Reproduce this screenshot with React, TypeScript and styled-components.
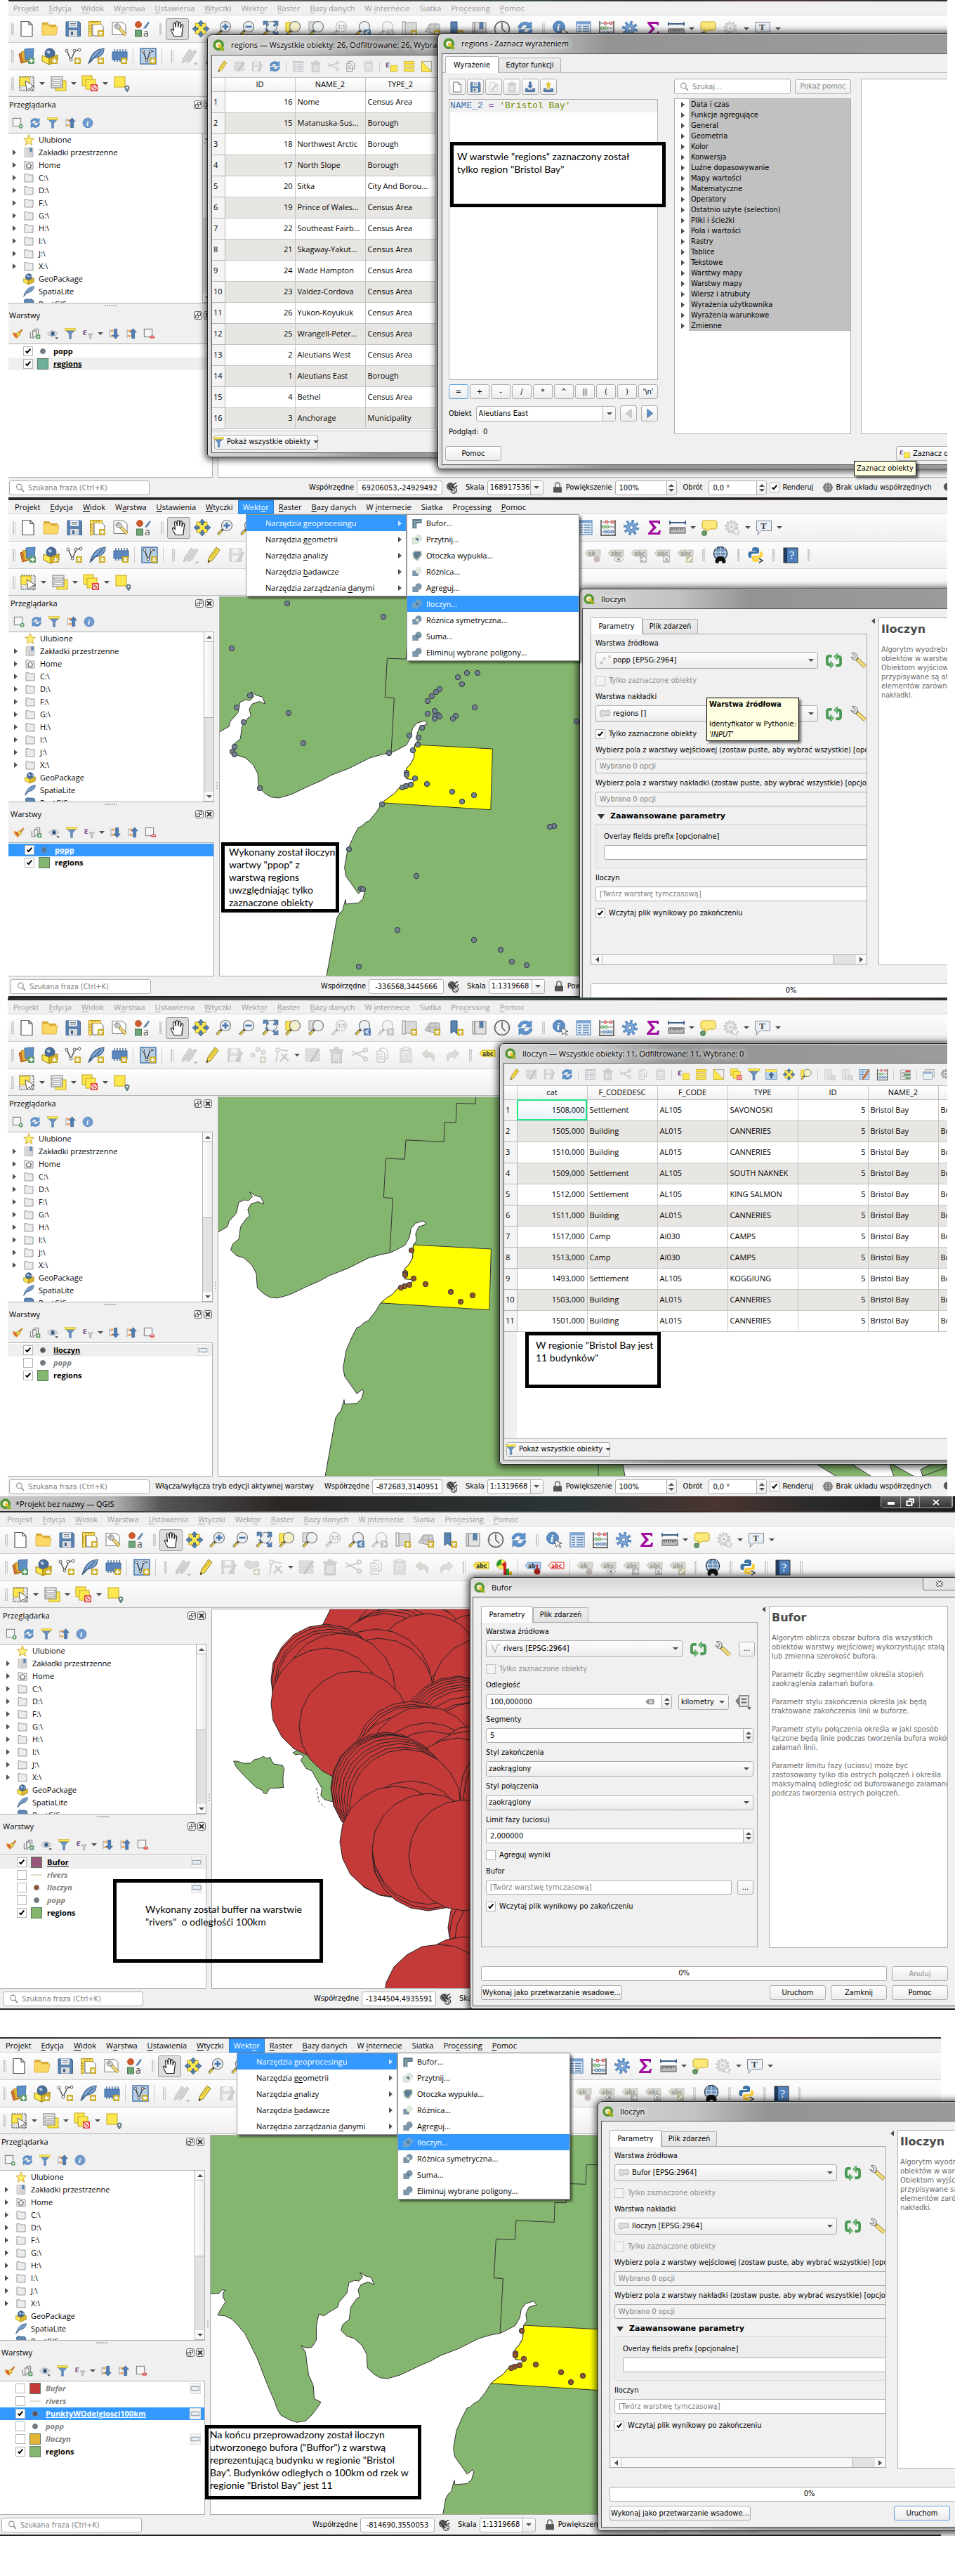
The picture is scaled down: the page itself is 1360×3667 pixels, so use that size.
import React from "react";
import styled, { createGlobalStyle, css } from "styled-components";

const ui = `"Open Sans", "Noto Sans", sans-serif`;
const form = `"DejaVu Sans Condensed", "DejaVu Sans", sans-serif`;
const green = "#85b66f";
const blue = "#3399ff";

const GlobalStyle = createGlobalStyle`
  *, *::before, *::after { box-sizing: border-box; }
  body { margin: 0; background: #fff; color: #000; font: 11px/18px ${ui}; }
  button, input, select { font: inherit; color: inherit; margin: 0; }
  u { text-underline-offset: 2px; }
`;

/* ---------- icons ---------- */

const Star = (
  <g>
    <rect x="14" y="14" width="9" height="9" rx="1" fill="#c9a91c" />
    <path d="M18.5 15.2v6.6M15.6 16.9l5.8 3.2M21.4 16.9l-5.8 3.2" stroke="#fff" strokeWidth="1.3" />
  </g>
);
const Lens = ({ fill = "#eef1f3" }: { fill?: string }) => (
  <g>
    <path d="M8.500 14.500L1.500 22" stroke="#555" strokeWidth="3.600" />
    <path d="M7 16.500L2 22" stroke="#f4d73a" strokeWidth="2" />
    <circle cx="14" cy="9" r="7.500" fill={fill} stroke="#777" strokeWidth="1.200" />
  </g>
);
const Tag = ({ fill, stroke, color, text = "abc" }: { fill: string; stroke: string; color: string; text?: string }) => (
  <g>
    <path d="M1 9.500L5 5h18v9H5z" fill={fill} stroke={stroke} />
    <text x="5" y="12.500" fontSize="8.500" fontWeight="700" fontFamily="DejaVu Sans Condensed" fill={color}>{text}</text>
  </g>
);
const grayTag = { fill: "#d9d9d2", stroke: "#c4c4bb", color: "#9b9b93" };
const Folder = (
  <path d="M3 4h6l2 2h10v15H3z" fill="#ececec" stroke="#888" strokeWidth="1.300" />
);
const Shape = ({ a, b, mid, dash }: { a: string; b: string; mid?: string; dash?: boolean }) => (
  <g>
    <rect x="2" y="9" width="13" height="12" fill={a} stroke={dash ? "#9ab09a" : "none"} strokeDasharray="2 2" />
    <circle cx="15" cy="9" r="7" fill={b} stroke={dash ? "#9ab09a" : "none"} strokeDasharray="2 2" />
    {mid && <path d="M9 9h6v6c-4 0-6-3-6-6z" fill={mid} />}
  </g>
);

const glyphs: Record<string, React.ReactNode> = {
  newdoc: <path d="M4 1.500h11l5 5V22.500H4zM15 1.500v5h5" fill="#fff" stroke="#555" strokeWidth="1.200" />,
  open: (
    <g>
      <path d="M1 3h8l2 3h10v4H1z" fill="#d9a93b" />
      <path d="M1 21V6h9l2 3h11l-2 12z" fill="#fbd765" stroke="#d9a93b" strokeWidth=".8" />
    </g>
  ),
  save: (
    <g>
      <path d="M2 2h19l1.500 2v18.500H2z" fill="#5a83b0" stroke="#41658f" />
      <rect x="6" y="2" width="12" height="8" fill="#e8eef5" />
      <path d="M8 4.500h8M8 7h8" stroke="#777" />
      <rect x="6" y="14" width="12" height="8.500" fill="#dcdcdc" />
      <rect x="9" y="16" width="3" height="5" fill="#41658f" />
    </g>
  ),
  layout: (
    <g>
      <path d="M7 5h11l4 4v13H7z" fill="#fff" stroke="#666" />
      <path d="M1.500 1.500h17v4h-13v17h-4z" fill="#fbe169" stroke="#b8941a" />
      <path d="M6 2v2M10 2v2M14 2v2M2 8h2M2 12h2M2 16h2" stroke="#8a6d10" />
      {Star}
    </g>
  ),
  style: (
    <g>
      <path d="M2 2.500h14l5 4v14H2z" fill="#fff" stroke="#777" />
      <path d="M11 10L21 21" stroke="#8b7420" strokeWidth="4.500" />
      <path d="M12 11L21 21" stroke="#f3dd7d" strokeWidth="3" />
      <path d="M6 6a4 4 0 0 1 6 6l-3 0a4 4 0 0 1-4-5l3 2 1.500-2z" fill="#d5d5d5" stroke="#666" strokeWidth=".8" />
    </g>
  ),
  symbols: (
    <g>
      <circle cx="6" cy="6" r="4.500" fill="#cf5a2b" stroke="#a8431b" strokeWidth=".7" />
      <path d="M14 10l6-8 2 1-5 8-4 1z" fill="#5a83b0" />
      <rect x="1.500" y="14" width="9" height="9" fill="#6ea476" stroke="#4a7d52" />
      <text x="13" y="23" fontSize="14" fontFamily="Open Sans" fill="#555">a</text>
    </g>
  ),
  hand: (
    <path d="M7 22.500C5 19 3 16 2.500 13.500c0-2 2.500-1.500 4 1.500L5.500 5c0-2 2.500-2 3 0l.8 5L9.500 3c.2-2 2.600-2 3 0l.2 7 .9-6c.5-2 2.700-1.500 2.700.3l-.3 6.700 1.200-4c.7-1.600 2.600-1 2.500.7-.2 5-1.700 7-1.700 14.800z" fill="#fff" stroke="#222" strokeWidth="1.200" />
  ),
  panmap: (
    <g>
      <rect x="4" y="4" width="15" height="15" fill="#fde74f" stroke="#c4a61a" />
      <g fill="#5a83b0" stroke="#365a85" strokeWidth=".8">
        <path d="M12 0l4 4.500h-2.500V8h-3V4.500H8zM12 24l4-4.500h-2.500V16h-3v3.500H8zM0 12l4.500-4v2.500H8v3H4.500V16zM24 12l-4.500-4v2.500H16v3h3.500V16z" />
      </g>
    </g>
  ),
  zoomin: <g><Lens /><path d="M14 4.500v9M9.500 9h9" stroke="#4a78ad" strokeWidth="2.800" /></g>,
  zoomout: <g><Lens /><path d="M9.500 9h9" stroke="#4a78ad" strokeWidth="2.800" /></g>,
  zoomfull: (
    <g>
      <Lens />
      <g fill="#5a83b0" stroke="#41658f" strokeWidth=".6">
        <path d="M2 1h7L7 3l3 3-2 2-3-3-3 2zM23 1v7l-2-2-3 3-2-2 3-3-3-3zM23 22h-7l2-2-3-3 2-2 3 3 3-3zM4 12l3 0 0 3z" />
      </g>
    </g>
  ),
  zoomsel: <g><rect x="1" y="3" width="11" height="13" fill="#fde74f" stroke="#c4a61a" /><Lens fill="#f3efcb" /></g>,
  zoomlayer: <g><rect x="1" y="2" width="11" height="13" fill="#ddd" stroke="#999" /><Lens /></g>,
  zoom11: <g><Lens /><text x="8.500" y="12" fontSize="8" fontWeight="700" fontFamily="Open Sans" fill="#555">1:1</text></g>,
  zoomlast: <g><Lens /><rect x="13" y="13" width="10" height="10" fill="#5a83b0" /><path d="M20 15l-4 3 4 3" fill="none" stroke="#fff" strokeWidth="1.700" /></g>,
  zoomnext: <g><Lens /><rect x="13" y="13" width="10" height="10" fill="#888" /><path d="M16 15l4 3-4 3" fill="none" stroke="#fff" strokeWidth="1.700" /></g>,
  newmap: <g><path d="M5 3h17v17H5z" fill="#dadada" stroke="#999" /><rect x="2" y="2" width="4" height="19" fill="#eee" stroke="#888" />{Star}</g>,
  new3d: <g><path d="M1 16L8 5h13l2 11-9 3z" fill="#cfcfcf" stroke="#999" /><path d="M4 12h18M9 5l-2 12M15 5l1 13" stroke="#aaa" />{Star}</g>,
  bmnew: <g><path d="M5 2h9v19l-4.500-4L5 20z" fill="#5a83b0" stroke="#365a85" />{Star}</g>,
  bookmarks: <g><path d="M3 3h3v18H3zM6 3h16v18H6z" fill="#e2e2e2" stroke="#888" /><path d="M13 3h5v10l-2.500-2-2.500 2z" fill="#5a83b0" stroke="#365a85" strokeWidth=".7" /></g>,
  clock: (
    <g>
      <circle cx="12" cy="12" r="10.500" fill="#f3f3f3" stroke="#666" strokeWidth="1.600" />
      <path d="M12 4v8l5 5" fill="none" stroke="#444" strokeWidth="1.400" />
      <path d="M12 2.500v2M12 19.500v2M2.500 12h2M19.500 12h2" stroke="#888" />
    </g>
  ),
  refresh: (
    <g fill="#5f93cd" stroke="#4173a8" strokeWidth=".7">
      <path d="M2 11C2 3 12 0 18 4l3-2v9h-9l3-3c-4-3-8-1-9 3z" />
      <path d="M22 13c0 8-10 11-16 7l-3 2v-9h9l-3 3c4 3 8 1 9-3z" />
    </g>
  ),
  identify: (
    <g>
      <circle cx="10" cy="9.500" r="8.500" fill="#5f8fc4" stroke="#4a78ad" />
      <text x="7" y="14.500" fontSize="14" fontStyle="italic" fontWeight="700" fontFamily="Liberation Serif" fill="#fff">i</text>
      <path d="M13 12l10 5-4 1 3 4-1.500 1-3-4-2.500 3z" fill="#fff" stroke="#555" />
    </g>
  ),
  table: (
    <g>
      <rect x="2" y="2" width="20" height="20" fill="#e3ecf7" stroke="#6a93c2" strokeWidth="1.300" />
      <rect x="2" y="2" width="20" height="3.500" fill="#7ba4d4" />
      <path d="M4 8.500h5M4 12h5M4 15.500h5M4 19h5M11 8.500h9M11 12h9M11 15.500h9M11 19h9" stroke="#5a83b0" strokeWidth="1.500" />
    </g>
  ),
  abacus: (
    <g>
      <path d="M2 1v22M22 1v22M1 23h22" stroke="#444" strokeWidth="1.400" />
      <path d="M2 4h20M2 11h20M2 18h20" stroke="#777" />
      <g fill="#f6bcbc" stroke="#c33"><circle cx="10" cy="4" r="2" /><circle cx="18" cy="4" r="2" /></g>
      <g fill="#c8e8c8" stroke="#4a9a4a"><circle cx="6" cy="11" r="2" /><circle cx="11" cy="11" r="2" /></g>
      <g fill="#c8dcf0" stroke="#3d6da3"><circle cx="8" cy="18" r="2" /><circle cx="13" cy="18" r="2" /><circle cx="18" cy="18" r="2" /></g>
    </g>
  ),
  gear: (
    <g>
      <circle cx="12" cy="12" r="9" fill="none" stroke="#5f8fc4" strokeWidth="4.500" strokeDasharray="3.500 3.570" />
      <circle cx="12" cy="12" r="7" fill="#7da8da" stroke="#4a78ad" />
      <circle cx="12" cy="12" r="2.600" fill="#f3f3f3" stroke="#4a78ad" />
    </g>
  ),
  sigma: <path d="M4 2h16v5h-2l-1-2H9l6 7-7 7h9l1.500-3H21l-1 6H3v-2l7-8-6-8z" fill="#a10fa1" />,
  ruler: (
    <g>
      <path d="M1 5h22M1 2.500v5M23 2.500v5" stroke="#3d5f85" strokeWidth="2" />
      <rect x="1" y="12" width="22" height="8" fill="#bbb" stroke="#555" />
      <path d="M4 12v4M7 12v3M10 12v4M13 12v3M16 12v4M19 12v3" stroke="#444" />
    </g>
  ),
  bubble: (
    <g>
      <path d="M5 2h15c2 0 3 1 3 3v6c0 2-1 3-3 3h-7l-6 5 1-5H5c-2 0-3-1-3-3V5c0-2 1-3 3-3z" fill="#fde97a" stroke="#c4a61a" />
      <circle cx="5" cy="20" r="3.500" fill="#6a9a6a" stroke="#4a7a4a" />
    </g>
  ),
  gearplay: (
    <g>
      <circle cx="11" cy="11" r="8" fill="#ccc" stroke="#888" strokeWidth="3" strokeDasharray="3 2" />
      <circle cx="11" cy="11" r="5" fill="#eee" stroke="#888" />
      <path d="M9.500 8.500l4 2.500-4 2.500z" fill="#777" />
      <path d="M14 13l9 5-4 1 2 3-2 1-2-3-2 2z" fill="#fff" stroke="#777" />
    </g>
  ),
  textnote: (
    <g>
      <path d="M1.500 2.500h21v14H8l-5 6 1-6H1.500z" fill="#e9f0f6" stroke="#889" />
      <text x="7" y="14" fontSize="13" fontWeight="700" fontFamily="Liberation Serif" fill="#444">T</text>
    </g>
  ),
  layers: (
    <g>
      <path d="M1 9l10-3 3 13-10 3z" fill="#d9752f" stroke="#a8531b" />
      <path d="M4 6l11-2 1 14-9 2z" fill="#e5b43b" stroke="#ad8318" />
      <path d="M9 2l13-1-1 15-11 1z" fill="#5f8fc4" stroke="#3d6da3" />
      <rect x="14" y="14" width="9" height="9" rx="1" fill="#5c9a66" />
      <path d="M18.500 15.500v6M15.500 18.500h6" stroke="#fff" strokeWidth="1.800" />
    </g>
  ),
  gpkg: (
    <g>
      <circle cx="12" cy="8" r="7" fill="#4a6f9c" stroke="#33506f" />
      <path d="M7 5l4-1 2 3-3 2zM14 7l4-2 0 4z" fill="#bcd0e4" />
      <path d="M1 11l10 4v9L1 19z" fill="#fce94f" stroke="#9b7d10" />
      <path d="M23 10l-12 5v9l12-5z" fill="#dcb92a" stroke="#9b7d10" />
    </g>
  ),
  gpkgnew: <g><circle cx="12" cy="8" r="7" fill="#4a6f9c" stroke="#33506f" /><path d="M7 5l4-1 2 3-3 2z" fill="#bcd0e4" /><path d="M1 11l10 4v9L1 19z" fill="#fce94f" stroke="#9b7d10" /><path d="M23 10l-12 5v9l12-5z" fill="#dcb92a" stroke="#9b7d10" />{Star}</g>,
  vnew: (
    <g>
      <path d="M3 4l6 13L15 4l5-1" fill="none" stroke="#555" strokeWidth="1.500" />
      <g fill="#fff" stroke="#555"><circle cx="3" cy="4" r="2" /><circle cx="9" cy="17" r="2" /><circle cx="14" cy="4" r="2" /><circle cx="21" cy="3" r="2" /></g>
      {Star}
    </g>
  ),
  feather: <path d="M1 23C5 8 12 2 23 1c0 8-6 13-17 14zM3 21L19 4" fill="#7ea6d3" stroke="#3f5f85" strokeWidth="1.200" />,
  feathernew: <g><path d="M1 23C5 8 12 2 23 1c0 8-6 13-17 14zM3 21L19 4" fill="#7ea6d3" stroke="#3f5f85" strokeWidth="1.200" />{Star}</g>,
  chip: (
    <g>
      <path d="M5 2v18M9 2v18M13 2v18M17 2v18M21 2v18" stroke="#3d5f85" strokeWidth="1.300" />
      <rect x="2" y="6" width="21" height="11" fill="#5a86bd" stroke="#3d6da3" />
      {Star}
    </g>
  ),
  vbox: (
    <g>
      <rect x="1" y="1" width="22" height="22" fill="#b9cfe6" stroke="#4a78ad" strokeWidth="1.500" />
      <path d="M5 5l5 14 5-14h5" fill="none" stroke="#444" strokeWidth="1.500" />
      <g fill="#fff" stroke="#555"><circle cx="5" cy="5" r="1.800" /><circle cx="10" cy="18" r="1.800" /><circle cx="15" cy="5" r="1.800" /></g>
      {Star}
    </g>
  ),
  pencils: <g fill="#aaa" stroke="#888"><path d="M2 22l2-7L13 2l4 3L8 19zM9 22l2-6 9-13 3 2-8 13z" /><path d="M19 22h5l-2.500 2z" fill="#555" /></g>,
  pencil: <g><path d="M4 23l2-8L16 1l5 4L11 19z" fill="#f5dc4c" stroke="#8f7a1c" /><path d="M4 23l1-4 2 2z" fill="#333" /><path d="M8 16L18 3" stroke="#b39a24" /></g>,
  saveedit: <g><path d="M2 3h17v18H2z" fill="#bbb" stroke="#777" /><path d="M6 3h9v6H6zM5 13h11v8H5z" fill="#eee" /><path d="M13 21L22 8" stroke="#999" strokeWidth="3.500" /></g>,
  points: <g><g fill="#ccc" stroke="#888"><circle cx="4" cy="12" r="3" /><circle cx="11" cy="4" r="3" /><circle cx="19" cy="8" r="3" /></g>{Star}</g>,
  blob: <g><path d="M2 5c5-6 9 2 14-1 8-2 7 8 2 8-5-2-7 6-12 1C2 12 0 9 2 5z" fill="#bbb" stroke="#888" />{Star}</g>,
  vertex: <g><path d="M4 22L7 4l14 2" fill="none" stroke="#888" strokeWidth="1.500" /><rect x="4" y="2" width="5" height="5" fill="#eee" stroke="#888" /><path d="M12 10l10 11M20 10L10 21" stroke="#999" strokeWidth="2.600" /></g>,
  editmulti: <g><path d="M1 3h20v4H1zM1 9h20v4H1zM1 15h20v5H1z" fill="#ccc89a" stroke="#999" /><path d="M8 22L20 4" stroke="#888" strokeWidth="3" /></g>,
  trash: <g fill="#c9a9a9" stroke="#987"><path d="M3 4h18v3H3zM9 1h6v3H9zM4.500 8h15v15h-15z" /><path d="M9 10v10M12 10v10M15 10v10" stroke="#fff" /></g>,
  cut: <g fill="none" stroke="#999" strokeWidth="2"><path d="M1 6l18 10M1 12l18-6" /><circle cx="20.500" cy="4.500" r="2.500" /><circle cx="20.500" cy="17.500" r="2.500" /></g>,
  copy: <g fill="#f4f4f4" stroke="#777"><path d="M8 2h7l4 4v11H8z" /><path d="M4 6h7l4 4v12H4z" /><path d="M6 11h6M6 14h7M6 17h7" /></g>,
  paste: <g fill="#f0f0f0" stroke="#888"><rect x="4" y="3" width="16" height="19" fill="#ddd" /><rect x="7" y="6" width="10" height="13" /><path d="M8 1h8v4H8zM9 10h6M9 13h6M9 16h6" /></g>,
  undo: <path d="M2 10l7-6v4c9 0 13 4 9 13 0-5-3-7-9-7v3z" fill="#c9b48d" stroke="#a79465" />,
  redo: <path d="M22 10l-7-6v4c-9 0-13 4-9 13 0-5 3-7 9-7v3z" fill="#aebfae" stroke="#8a9c8a" />,
  abc: <Tag fill="#fce94f" stroke="#c4a61a" color="#333" />,
  diagram: <g><circle cx="8" cy="8" r="7" fill="#fce94f" stroke="#888" strokeWidth=".5" /><path d="M8 8V1a7 7 0 0 0-6 10z" fill="#2c9a2c" /><path d="M8 8l6-4a7 7 0 0 1-1 9z" fill="#c22" /><path d="M11 10h4v13h-4z" fill="#c22" /><path d="M15 14h4v9h-4z" fill="#2c9a2c" /><path d="M19 18h4v5h-4z" fill="#d8b51c" /></g>,
  abpin: <g><Tag fill="#b9d4f3" stroke="#5a86bd" color="#333" text="ab" /><path d="M18 8v8" stroke="#a33" strokeWidth="2.500" /><circle cx="18" cy="18" r="4.500" fill="#a52222" /></g>,
  abcred: <Tag fill="#fff" stroke="#d22" color="#d22" />,
  tagpin: <g><Tag {...grayTag} text="ab" /><circle cx="18" cy="18" r="4.500" fill="#c9b9b9" /></g>,
  tageye: <g><Tag {...grayTag} /><path d="M9 18c4-5 10-5 14 0-4 5-10 5-14 0z" fill="#eee" stroke="#aaa" /><circle cx="16" cy="18" r="2" fill="#999" /></g>,
  tagmove: <g><Tag {...grayTag} /><rect x="13" y="13" width="10" height="10" fill="#bbb" /><path d="M15 18h6M18 15l3 3-3 3" fill="none" stroke="#fff" strokeWidth="1.500" /></g>,
  tagrot: <g><Tag {...grayTag} /><rect x="13" y="13" width="10" height="10" fill="#bbb" /><path d="M16 20a3 3 0 1 1 4 0" fill="none" stroke="#fff" strokeWidth="1.500" /></g>,
  tagedit: <g><Tag {...grayTag} /><rect x="13" y="13" width="10" height="10" fill="#cbc7a8" /><path d="M15 21l6-6" stroke="#fff" strokeWidth="1.800" /></g>,
  globe: <g><circle cx="12" cy="10" r="9.500" fill="#6f93bb" stroke="#26384d" strokeWidth="1.500" /><path d="M3 8h18M3 13h18M12 1v18M7 2c-3 5-3 11 0 16M17 2c3 5 3 11 0 16" fill="none" stroke="#dfe8f0" /><path d="M5 23c-2-3 2-9 5-9h4c3 0 7 6 5 9-2 2-5 1-5-2h-4c0 3-3 4-5 2z" fill="#111" /></g>,
  python: <g><path d="M12 1c-5 0-5 2-5 5h6v1H4c-3 0-4 8 0 9h2v-4c0-1 1-2 3-2h6c1 0 2-1 2-2V4c0-2-2-3-5-3z" fill="#3b73a6" /><path d="M12 22c5 0 5-2 5-5h-6v-1h8c4 0 4-8 1-9h-2v4c0 1-1 2-3 2H9c-1 0-2 1-2 2v4c0 2 2 3 5 3z" fill="#fcd23f" /><path d="M17 17l5 3-5 3" fill="none" stroke="#444" strokeWidth="1.500" /></g>,
  book: <g><rect x="2" y="2" width="20" height="21" fill="#4f81bd" stroke="#333" /><rect x="2" y="2" width="5" height="21" fill="#223c5c" /><text x="10" y="18" fontSize="16" fontFamily="Liberation Serif" fill="#fff">?</text></g>,
  selrect: <g><rect x="2" y="2" width="20" height="20" fill="#e4e4e4" stroke="#222" strokeDasharray="2 1.500" /><rect x="2" y="3" width="14" height="12" fill="#fde74f" stroke="#c4a61a" /><path d="M10 8l13 8-5 1 3 5-2 1-3-5-4 4z" fill="#fff" stroke="#555" /></g>,
  selform: <g><rect x="8" y="8" width="15" height="14" fill="#fde74f" stroke="#c4a61a" /><rect x="2" y="2" width="16" height="16" fill="#e9e9e9" stroke="#777" /><path d="M4 6h12v3H4zM4 12h12v3H4z" fill="#fff" stroke="#888" /></g>,
  deselect: <g><rect x="1" y="1" width="14" height="14" fill="#fde74f" stroke="#c4a61a" /><rect x="6" y="6" width="14" height="14" fill="#fde74f" stroke="#c4a61a" /><rect x="13" y="13" width="10" height="10" rx="1" fill="#d33" /><circle cx="18" cy="18" r="3.200" fill="none" stroke="#fff" strokeWidth="1.300" /><path d="M15.500 20.500l5-5" stroke="#fff" strokeWidth="1.300" /></g>,
  selloc: <g><rect x="2" y="2" width="15" height="15" fill="#fde74f" stroke="#c4a61a" /><path d="M20 24c-4-5-4-9 0-9s4 4 0 9z" fill="#6b8797" stroke="#466" strokeWidth=".8" /><circle cx="20" cy="18" r="1.300" fill="#fff" /></g>,
  additem: <g><rect x="2" y="2" width="17" height="17" fill="#f5f5f5" stroke="#777" strokeWidth="1.500" /><circle cx="19" cy="19" r="4.500" fill="#5c9a66" /><path d="M19 16.500v5M16.500 19h5" stroke="#fff" strokeWidth="1.500" /></g>,
  removeitem: <g><rect x="2" y="2" width="17" height="17" fill="#f5f5f5" stroke="#777" strokeWidth="1.500" /><rect x="14" y="16" width="10" height="6" rx="2" fill="#d44" /><path d="M16 19h6" stroke="#fff" strokeWidth="1.500" /></g>,
  filter: <g><path d="M2 4h20l-8 9v10h-4V13z" fill="#6a93c2" stroke="#456f9f" /><rect x="1" y="1" width="22" height="4" fill="#fde74f" stroke="#c4a61a" strokeWidth=".8" /></g>,
  collapse: <g><path d="M3 3v18M3 6h5M3 17h5" stroke="#888" /><rect x="6" y="4" width="5" height="4" fill="#f59b3f" /><rect x="6" y="15" width="5" height="4" fill="#f59b3f" /><path d="M16 1l7 8h-4v13h-6V9H9z" fill="#4f7db3" stroke="#365a85" /></g>,
  expand: <g><path d="M3 3v18M3 6h5M3 17h5" stroke="#888" /><rect x="6" y="4" width="5" height="4" fill="#f59b3f" /><rect x="6" y="15" width="5" height="4" fill="#f59b3f" /><path d="M16 23l7-8h-4V2h-6v13H9z" fill="#4f7db3" stroke="#365a85" /></g>,
  info: <g><circle cx="12" cy="12" r="10.500" fill="#6f9bcf" stroke="#4a78ad" /><text x="9" y="18" fontSize="17" fontStyle="italic" fontWeight="700" fontFamily="Liberation Serif" fill="#fff">i</text></g>,
  brush: <g><path d="M1 9l6 1 8 5-4 7C5 21 1 15 1 9z" fill="#e8a33a" /><path d="M3 10l5 9 3 2-3-9z" fill="#d64b3a" /><path d="M9 12l4-4 5 6-4 4z" fill="#f5dc4c" stroke="#8f7a1c" /><path d="M14 9l7-7 2 2-6 8z" fill="#c77b2a" /></g>,
  addgroup: <g fill="none" stroke="#777" strokeWidth="1.500"><path d="M7 18V6h3M11 14V2h8v12M2 9v12h9" /><rect x="7" y="6" width="8" height="12" fill="#eee" /><rect x="14" y="14" width="9" height="9" fill="#5c9a66" stroke="none" /><path d="M18.500 16v5M16 18.500h5" stroke="#fff" /></g>,
  eye: <g><path d="M1 12C6 4 17 4 22 12 17 19 6 19 1 12z" fill="#eee" stroke="#999" strokeWidth="1.500" /><circle cx="12" cy="12" r="5" fill="#6a8fb8" /><circle cx="12" cy="12" r="2.200" fill="#123" /><path d="M17 20h7l-3.500 4z" fill="#555" /></g>,
  eps: <g><text x="1" y="15" fontSize="21" fontFamily="Liberation Serif" fontWeight="700" fill="#7a4a86">ε</text><path d="M12 12h11l-4 5v6h-3v-6z" fill="#ccc" stroke="#999" /></g>,
  star: <path d="M12 1l3 8 8 .5-6 5.500 2 8-7-4.500L5 23l2-8-6-5.500L9 9z" fill="#fdee76" stroke="#c99a1c" strokeWidth="1.300" />,
  folder: Folder,
  home: <g>{Folder}<path d="M12 8l6 5h-2v5H8v-5H6z" fill="#fff" stroke="#333" strokeWidth="1.300" /></g>,
  bookmark: <g><rect x="3" y="2" width="18" height="20" rx="1" fill="#d4d4d4" stroke="#aaa" /><path d="M6 2v20" stroke="#f5f5f5" /><path d="M14 2h5v10l-2.500-2-2.500 2z" fill="#5a83b0" /></g>,
  elephant: <path d="M2 4c3-4 7-3 10-2 4-1 9 0 10 3 1 6-2 9-4 13-2 4-5 3-5 0v-5c-4 3-8 4-9-1z" fill="#5f88b5" stroke="#355a80" strokeWidth="1.500" />,
  epsy: <g><rect x="10" y="10" width="13" height="12" fill="#fde74f" stroke="#c4a61a" /><text x="0" y="14" fontSize="20" fontFamily="Liberation Serif" fontWeight="700" fill="#6a4378">ε</text></g>,
  selall: <path d="M2 2h20v5H2zM2 9.500h20v5H2zM2 17h20v5H2z" fill="#fde74f" stroke="#c4a61a" />,
  invert: <g><rect x="2" y="2" width="20" height="20" fill="#fdf6b0" stroke="#c4a61a" /><path d="M2 2l20 20V2z" fill="#eee" stroke="#999" /><path d="M2 2l20 20H2z" fill="#fde74f" stroke="#c4a61a" /></g>,
  movetop: <g><rect x="1" y="2" width="22" height="20" fill="#bcd3ec" stroke="#5a83b0" /><rect x="1" y="2" width="22" height="5" fill="#fde74f" /><path d="M12 7l6 7h-4v6h-4v-6H6z" fill="#41658f" /></g>,
  column: <g fill="#ddd" stroke="#999"><path d="M2 2h7v20H2zM9 2h7v20H9z" /><rect x="14" y="14" width="9" height="9" fill="#bbb" /></g>,
  editcol: <g><rect x="1" y="2" width="20" height="20" fill="#cfe0f3" stroke="#5a83b0" /><path d="M1 7h20M1 12h20M1 17h20M8 2v20" stroke="#5a83b0" /><path d="M8 22L20 3" stroke="#c96d2b" strokeWidth="3.500" /></g>,
  cond: <g><path d="M2 3h20v5H2zM2 10h20v5H2zM2 17h20v5H2z" fill="#eee" stroke="#888" /><path d="M12 4h9v3h-9z" fill="#d44" /><path d="M8 11h13v3H8zM12 18h9v3h-9z" fill="#5c9a66" /></g>,
  docked: <g><rect x="5" y="2" width="18" height="15" fill="#e5e5e5" stroke="#999" /><rect x="1" y="7" width="18" height="15" fill="#e9f0f8" stroke="#8899aa" /><path d="M1 7h18v4H1z" fill="#9db6d3" /></g>,
  search: <g fill="none" stroke="#888" strokeWidth="2"><circle cx="10" cy="9" r="7" /><path d="M15 14l7 8" strokeWidth="3" /></g>,
  cycle: <g fill="none" stroke="#4c9a55" strokeWidth="4"><path d="M9 5H5c-2 0-3 1-3 3v7c0 2 1 3 3 3h3M15 19h4c2 0 3-1 3-3V9c0-2-1-3-3-3h-3" /><path d="M17 1l-5 5 5 5zM7 13l5 5-5 5z" fill="#7cc184" strokeWidth="1" /></g>,
  wrench: <g><path d="M10 10L22 21" stroke="#8b7420" strokeWidth="5.500" /><path d="M11 11L22 21" stroke="#f3dd7d" strokeWidth="4" /><path d="M3 2c5-2 9 2 8 6l-1 3c-3 1-7 0-8-4l4 2 2-3z" fill="#e5e5e5" stroke="#666" /></g>,
  lock: <g><path d="M7 12V7c0-7 10-7 10 0v5" fill="none" stroke="#777" strokeWidth="2.500" /><rect x="3" y="11" width="18" height="12" rx="1" fill="#555" /></g>,
  extent: <g><circle cx="9" cy="9" r="7" fill="#777" stroke="#222" /><circle cx="16" cy="17" r="6" fill="#ddd" stroke="#222" strokeWidth="1.500" /><path d="M4 6l10 12M8 3l10 12M14 6l7-4M19 10l4-2M13 16h2M17 19h2" stroke="#222" strokeWidth="1.800" /></g>,
  crs: <g><circle cx="12" cy="12" r="9.500" fill="#aaa" stroke="#666" /><path d="M0 12h24M3 7h18M3 17h18M12 2v20M7 3c-3 6-3 12 0 18M17 3c3 6 3 12 0 18" fill="none" stroke="#555" /></g>,
  message: <path d="M12 2C2 2 0 9 2 14c2 4 6 5 9 5l3 4 1-5c6-1 8-5 7-9s-4-7-10-7z" fill="#555" />,
  memory: <g><path d="M4 5v14M8 5v14M12 5v14M16 5v14M20 5v14" stroke="#888" /><rect x="2" y="8" width="20" height="8" fill="#eef1f5" stroke="#8898a8" strokeWidth="1.500" /></g>,
  polyline: <path d="M3 3l7 17L16 4l6-1" fill="none" stroke="#999" strokeWidth="1.500" />,
  polygon: <path d="M2 6c5-3 8 2 12 0 6-2 8-1 8 5s-4 5-8 4-6 4-10 3S0 9 2 6z" fill="#ddd" stroke="#888" />,
  pointset: <g fill="#fff" stroke="#777"><circle cx="4" cy="17" r="2" /><circle cx="10" cy="8" r="2" /><circle cx="21" cy="4" r="2" /></g>,
  override: <g fill="#e8e8e8" stroke="#666" strokeWidth="1.300"><path d="M1 11l6-7v14z" fill="#888" /><path d="M6 3h14v16H6z" /><path d="M9 8h8M9 13h8" strokeWidth="2" /><path d="M18 20h6l-3 4z" fill="#555" stroke="none" /></g>,
  clear: <g><path d="M0 12l7-7h16v14H7z" fill="#999" /><path d="M10 8l8 8M18 8l-8 8" stroke="#fff" strokeWidth="2" /></g>,
  import: <g><path d="M2 15h5v3h10v-3h5v7H2z" fill="#5a83b0" stroke="#365a85" /><path d="M12 15l5-6h-3V1h-4v8H7z" fill="#4f7db3" stroke="#365a85" /></g>,
  export: <g><path d="M2 15h5v3h10v-3h5v7H2z" fill="#5a83b0" stroke="#365a85" /><path d="M12 1l5 6h-3v8h-4V7H7z" fill="#f0d92f" stroke="#c4a61a" /></g>,
  editdoc: <g><path d="M3 2h12l5 5v15H3z" fill="#f3f3f3" stroke="#888" /><path d="M8 19L19 5" stroke="#999" strokeWidth="3.500" /></g>,
  prev: <path d="M18 2v20L5 12z" fill="#ccc" stroke="#aaa" />,
  next: <path d="M6 2v20l13-10z" fill="#5a8cc5" stroke="#3a628f" />,
  buffer: <g><path d="M2 3h20v9H11v11H2z" fill="#5d7b93" /><path d="M7 22V8h14" fill="none" stroke="#9db3a5" strokeWidth="2" /></g>,
  clip: <Shape a="#dfe8dc" b="#dfe8dc" mid="#5d7b93" dash />,
  hull: <g><path d="M2 6l5-4h14l1 9-9 12-9-5z" fill="#9db3a5" /><path d="M4 8l4-4h11l0 6-8 9-5-5z" fill="#5d7b93" /></g>,
  diff: <Shape a="#7c96aa" b="#dfe8dc" />,
  dissolve: <Shape a="#7c96aa" b="#7c96aa" />,
  intersect: <Shape a="#6f9fc9" b="#6f9fc9" mid="#4a7896" dash />,
  symdiff: <Shape a="#7c96aa" b="#7c96aa" mid="#dfe8dc" />,
  union: <Shape a="#7c96aa" b="#7c96aa" mid="#5d7b93" />,
  qgis: <g><circle cx="11.500" cy="11.500" r="8.300" fill="#f6f6e4" stroke="#589632" strokeWidth="5.500" /><path d="M12 12l5 0 6 7v4h-5l-6-7z" fill="#93b023" /><path d="M10 10h5l3 4-4 4-4-4z" fill="#f0bd2d" /></g>,
};

const Svg = styled.svg<{ $dim?: boolean }>`
  display: block;
  flex: none;
  overflow: visible;
  ${(p) => p.$dim && css`opacity: 0.45; filter: grayscale(0.8);`}
`;
const Icon = ({ name, size = 24, dim }: { name: string; size?: number; dim?: boolean }) => (
  <Svg width={size} height={size} viewBox="0 0 24 24" $dim={dim} aria-hidden="true">{glyphs[name]}</Svg>
);

/* ---------- shared parts ---------- */

const Mnemonic = ({ text }: { text: string }) => {
  const i = text.indexOf("&");
  if (i < 0) return <>{text}</>;
  return <>{text.slice(0, i)}<u>{text[i + 1]}</u>{text.slice(i + 2)}</>;
};

const Arrow = styled.span<{ $dir?: "down" | "right" | "up" | "left"; $light?: boolean }>`
  display: block;
  flex: none;
  width: 0;
  height: 0;
  border: 4px solid transparent;
  ${(p) => {
    const c = p.$light ? "#cfe5ff" : "#505050";
    switch (p.$dir) {
      case "right": return `border-left: 5px solid ${c}; border-right: 0;`;
      case "left": return `border-right: 5px solid ${c}; border-left: 0;`;
      case "up": return `border-bottom: 4px solid ${c}; border-top: 0;`;
      default: return `border-top: 4px solid ${c}; border-bottom: 0;`;
    }
  }}
`;

const Check = styled.input.attrs({ type: "checkbox" })`
  appearance: none;
  flex: none;
  width: 14px;
  height: 14px;
  border: 1px solid #b4b4b4;
  background: #fff;
  display: grid;
  place-items: center;
  &:checked::after {
    content: "";
    width: 4px;
    height: 8px;
    margin-bottom: 2px;
    border: solid #000;
    border-width: 0 2px 2px 0;
    transform: rotate(40deg);
  }
  &:disabled { background: #f3f3f3; border-color: #c4c4c4; }
`;

const PushButton = styled.button<{ $w?: number; $focus?: boolean }>`
  display: inline-flex;
  align-items: center;
  justify-content: center;
  gap: 4px;
  flex: none;
  height: 21px;
  ${(p) => p.$w && `width: ${p.$w}px;`}
  padding: 0 4px;
  border: 1px solid ${(p) => (p.$focus ? "#5c9fe0" : "#adadad")};
  border-radius: 3px;
  background: linear-gradient(#fefefe, #ececec);
  white-space: nowrap;
  &:disabled { color: #8c8c8c; }
`;

const Box = styled.div<{ $w?: number; $h?: number; $plain?: boolean; $flat?: boolean }>`
  display: flex;
  align-items: center;
  flex: ${(p) => (p.$w ? "none" : "1 1 auto")};
  min-width: 0;
  ${(p) => p.$w && `width: ${p.$w}px;`}
  height: ${(p) => p.$h ?? 21}px;
  border: 1px solid #adadad;
  border-radius: 3px;
  background: ${(p) => (p.$flat ? "#f2f2f2" : p.$plain ? "#fff" : "linear-gradient(#fdfdfd, #ececec)")};
  overflow: hidden;
`;
const BoxInput = styled.input<{ $center?: boolean }>`
  flex: 1;
  width: 0;
  min-width: 0;
  height: 100%;
  border: 0;
  padding: 0 5px;
  outline: 0;
  background: transparent;
  text-align: ${(p) => (p.$center ? "center" : "left")};
  &::placeholder { color: #7f7f7f; opacity: 1; }
`;
const BoxSelect = styled.select`
  flex: 1;
  width: 0;
  min-width: 0;
  height: 100%;
  border: 0;
  padding: 0 0 0 3px;
  appearance: none;
  background: transparent;
`;
const BoxEnd = styled.span<{ $line?: boolean; $w?: number }>`
  display: flex;
  flex-direction: column;
  gap: 3px;
  align-items: center;
  justify-content: center;
  width: ${(p) => p.$w ?? 18}px;
  height: 100%;
  flex: none;
  ${(p) => p.$line && css`border-left: 1px solid #adadad; background: linear-gradient(#fefefe, #ececec);`}
`;
const BoxLead = styled.span`
  display: flex;
  padding-left: 5px;
`;

const Combo = ({ id, value, w, h, icon, line, label }: { id?: string; value: string; w?: number; h?: number; icon?: string; line?: boolean; label?: string }) => (
  <Box $w={w} $h={h} $plain={line}>
    {icon && <BoxLead><Icon name={icon} size={16} /></BoxLead>}
    <BoxSelect id={id} aria-label={label} defaultValue={value}><option>{value}</option></BoxSelect>
    <BoxEnd $line={line}><Arrow /></BoxEnd>
  </Box>
);
const Spin = ({ id, value, w, clear, label }: { id?: string; value: string; w?: number; clear?: boolean; label?: string }) => (
  <Box $w={w} $plain>
    <BoxInput id={id} aria-label={label} defaultValue={value} />
    {clear && <BoxLead><Icon name="clear" size={13} /></BoxLead>}
    {clear && <BoxEnd $w={10} />}
    <BoxEnd $line $w={14}><Arrow $dir="up" /><Arrow /></BoxEnd>
  </Box>
);

const Note = styled.p<{ $x: number; $y: number; $w: number; $h: number; $pad?: string; $clear?: boolean }>`
  position: absolute;
  left: ${(p) => p.$x}px;
  top: ${(p) => p.$y}px;
  width: ${(p) => p.$w}px;
  height: ${(p) => p.$h}px;
  margin: 0;
  padding: ${(p) => p.$pad ?? "6px"};
  border: 5px solid #000;
  background: ${(p) => (p.$clear ? "transparent" : "#fff")};
  font: 14px/18px Lato, ${ui};
  white-space: pre;
  z-index: 3;
`;

/* ---------- main window ---------- */

/* $cut trims everything at the right edge, $r only insets the main window */
const Stage = styled.section<{ $l?: number; $r?: number; $cut?: number }>`
  position: relative;
  overflow: hidden;
  margin-right: ${(p) => p.$cut ?? 0}px;
  padding: 0 ${(p) => p.$r ?? 0}px 0 ${(p) => p.$l ?? 0}px;
`;
const Edge = styled.div<{ $plain?: boolean }>`
  height: 2px;
  background: ${(p) => (p.$plain ? "#222" : "linear-gradient(90deg, #2a2a2a, #555 30%, #3b4a4a 55%, #2a2a2a 70%, #4d3a36 80%, #2a2a2a)")};
`;
const Chrome = styled.div`
  background: #f0f0f0;
`;
const MenuBar = styled.nav<{ $pad: number; $off?: boolean }>`
  display: flex;
  height: 20px;
  padding-left: ${(p) => p.$pad}px;
  border-bottom: 1px solid #d8d8d8;
  color: ${(p) => (p.$off ? "#9c9c9c" : "#000")};
`;
const MenuButton = styled.button<{ $on?: boolean }>`
  height: 20px;
  padding: 0 ${(p) => (p.$on ? 6 : 7)}px;
  border: ${(p) => (p.$on ? "1px solid #2a7fd8" : "0")};
  background: ${(p) => (p.$on ? blue : "none")};
  ${(p) => p.$on && "color: #fff;"}
  white-space: nowrap;
`;
const ToolRow = styled.div<{ $pad?: number; $h?: number; $last?: boolean }>`
  display: flex;
  align-items: center;
  height: ${(p) => p.$h ?? 39}px;
  padding-left: ${(p) => p.$pad ?? 0}px;
  border-bottom: 1px solid ${(p) => (p.$last ? "#b4b4b4" : "#cfcfcf")};
  background: linear-gradient(#fdfdfd, #efefef);
  overflow: hidden;
`;
const Grip = styled.span<{ $w?: number }>`
  flex: none;
  width: ${(p) => p.$w ?? 17}px;
  height: 18px;
  background: radial-gradient(circle at 1px 1px, #b5b5b5 1px, transparent 1px) center / 3px 3px content-box;
  padding: 0 ${(p) => (p.$w ? "1px 0 3px" : "5px 0 7px")};
`;
const Rule = styled.span<{ $h?: number }>`
  flex: none;
  width: 1px;
  height: ${(p) => p.$h ?? 22}px;
  margin: 0 4px 0 3px;
  background: #cdcdcd;
`;
const ToolButton = styled.button<{ $w?: number; $on?: boolean }>`
  display: grid;
  place-items: center;
  flex: none;
  width: ${(p) => p.$w ?? 33}px;
  height: ${(p) => (p.$w ? 24 : 31)}px;
  padding: 0;
  border: ${(p) => (p.$on ? "1px solid #9a9a9a" : "0")};
  border-radius: 3px;
  background: ${(p) => (p.$on ? "#dcdcdc" : "none")};
`;
const Drop = styled.button`
  display: grid;
  place-items: center;
  flex: none;
  width: 12px;
  height: 24px;
  border: 0;
  padding: 0;
  background: none;
`;

/* ":" grip, "|" rule, "v" drop arrow, "~" disabled, "!" pressed */
const Tools = ({ items, w, size, shown }: { items: string; w?: number; size?: number; shown?: number }) => (
  <>
    {items.split(" ").slice(0, shown).map((item, i) => {
      if (item === ":") return <Grip key={i} $w={i === 0 ? 9 : undefined} />;
      if (item === "|") return <Rule key={i} $h={w ? 14 : 24} />;
      if (item === "v") return <Drop key={i} type="button" aria-label="menu"><Arrow /></Drop>;
      const name = item.replace(/^[~!]/, "");
      return (
        <ToolButton key={i} type="button" $w={w} $on={item[0] === "!"} aria-label={name}>
          <Icon name={name} size={size} dim={item[0] === "~"} />
        </ToolButton>
      );
    })}
  </>
);

const row1 = ": newdoc open save layout style symbols : !hand panmap zoomin zoomout zoomfull zoomsel zoomlayer ~zoom11 zoomlast ~zoomnext newmap new3d bmnew bookmarks clock refresh : identify table abacus gear sigma ruler v bubble ~gearplay v textnote v";
const row2 = (digitize: string) =>
  `: layers gpkgnew vnew feathernew chip | vbox | : ~pencils pencil ~saveedit ~${digitize} ~vertex v ~editmulti ~trash ~cut ~copy ~paste ~undo ~redo : abc diagram | abpin abcred | tagpin tageye tagmove tagrot tagedit : globe : python : book :`;
const row3 = ": selrect v selform v deselect v selloc";

const menus = ["Pro&jekt", "&Edycja", "&Widok", "W&arstwa", "&Ustawienia", "&Wtyczki", "Wekt&or", "&Raster", "&Bazy danych", "W &internecie", "Siatka", "Pro&cessing", "&Pomoc"];

const Body = styled.div`
  display: flex;
  height: 542px;
`;
const SideGrip = styled.div`
  flex: none;
  width: 7px;
  background: radial-gradient(circle at 1px 1px, #b5b5b5 1px, transparent 1px) 3px 265px / 3px 4px no-repeat, radial-gradient(circle at 1px 1px, #b5b5b5 1px, transparent 1px) 3px 269px / 3px 4px no-repeat, radial-gradient(circle at 1px 1px, #b5b5b5 1px, transparent 1px) 3px 273px / 3px 4px no-repeat;
`;
const Docks = styled.div<{ $pad: number }>`
  flex: none;
  width: ${(p) => 291 + p.$pad}px;
  display: flex;
  flex-direction: column;
`;
const DockTitle = styled.div<{ $pad: number }>`
  display: flex;
  align-items: center;
  gap: 2px;
  height: 22px;
  padding: 0 1px 0 ${(p) => p.$pad + 1}px;
`;
const DockName = styled.h2`
  flex: 1;
  margin: 0;
  font: inherit;
`;
const DockButton = styled.button`
  display: grid;
  place-items: center;
  width: 12px;
  height: 12px;
  padding: 0;
  border: 1px solid #666;
  border-radius: 3px;
  background: #f6f6f6;
`;
const DockTools = styled.div<{ $pad: number }>`
  display: flex;
  align-items: center;
  height: 29px;
  padding-left: ${(p) => p.$pad}px;
`;
const Tree = styled.div`
  display: flex;
  height: 243px;
  border: 1px solid #b0b0b0;
  border-left: 0;
  background: #fff;
`;
const TreeList = styled.ul<{ $pad: number }>`
  flex: 1;
  margin: 0;
  padding: 0 0 0 ${(p) => p.$pad}px;
  list-style: none;
  overflow: hidden;
`;
const TreeRow = styled.li`
  display: flex;
  align-items: center;
  height: 18px;
  padding-left: 6px;
`;
const Twist = styled.span`
  width: 15px;
  display: flex;
`;
const TreeText = styled.span`
  padding-left: 6px;
  white-space: nowrap;
`;
const Scroll = styled.div`
  display: flex;
  flex-direction: column;
  width: 14px;
  border-left: 1px solid #b0b0b0;
  background: #e2e2e2;
`;
const ScrollEnd = styled.span`
  display: grid;
  place-items: center;
  height: 14px;
  background: #fafafa;
  border-bottom: 1px solid #b0b0b0;
`;
const ScrollThumb = styled.span`
  height: 108px;
  border-bottom: 1px solid #b0b0b0;
  background: linear-gradient(90deg, #fefefe, #ececec);
  margin-bottom: auto;
`;
const Splitter = styled.div`
  width: 18px;
  height: 6px;
  margin: 0 auto;
  background: radial-gradient(circle at 1px 1px, #b5b5b5 1px, transparent 1px) 0 2px / 3px 6px repeat-x;
`;
const Layers = styled.ul`
  flex: 1;
  margin: 0;
  padding: 1px 0 0;
  list-style: none;
  border: 1px solid #b0b0b0;
  border-left: 0;
  background: #fff;
`;
const LayerRow = styled.li<{ $pad: number; $tone?: "gray" | "blue" }>`
  display: flex;
  align-items: center;
  height: 18px;
  padding: 0 5px 0 ${(p) => p.$pad + 21}px;
  background: ${(p) => (p.$tone === "gray" ? "#efefef" : p.$tone === "blue" ? blue : "none")};
`;
const Swatch = styled.span<{ $c: string; $kind: "dot" | "fill" | "line" }>`
  flex: none;
  width: 16px;
  margin: 0 7px 0 6px;
  ${(p) => p.$kind === "fill" && css`height: 16px; background: ${p.$c}; border: 1px solid #5b7a5b;`}
  ${(p) => p.$kind === "line" && css`height: 2px; background: ${p.$c};`}
  ${(p) => p.$kind === "dot" && css`width: 8px; height: 8px; border-radius: 50%; background: ${p.$c}; border: 1px solid #777; margin: 0 11px 0 10px;`}
`;
const LayerName = styled.label<{ $off?: boolean; $under?: boolean; $light?: boolean }>`
  flex: 1;
  font-weight: 700;
  white-space: nowrap;
  ${(p) => p.$off && "font-style: italic; color: #7f7f7f;"}
  ${(p) => p.$under && "text-decoration: underline;"}
  ${(p) => p.$light && "color: #fff;"}
`;
const MemoryTag = styled.span`
  display: grid;
  place-items: center;
  width: 16px;
  height: 16px;
  border: 1px solid #ddd;
  background: #f5f5f5;
`;
const MapPane = styled.div`
  flex: 1;
  min-width: 0;
  height: 541px;
  margin-top: 1px;
  border: 1px solid #aaa;
  border-right: 0;
  background: #fff;
  overflow: hidden;
`;
const MapSvg = styled.svg`
  display: block;
  width: 100%;
  height: 100%;
`;
const StatusBar = styled.footer<{ $pad: number }>`
  display: flex;
  align-items: center;
  height: 28px;
  padding-left: ${(p) => p.$pad + 1}px;
  font-family: ${form};
  overflow: hidden;
  white-space: nowrap;
`;
const StatusLead = styled.div`
  display: flex;
  align-items: center;
  gap: 4px;
  flex: none;
  width: 617px;
`;
const StatusMessage = styled.span`
  flex: 1;
  padding-left: 4px;
`;
const StatusTail = styled.div`
  display: flex;
  align-items: center;
  gap: 4px;
  flex: none;
  padding-left: 5px;
`;
const Gap = styled.span<{ $w: number }>`
  flex: none;
  width: ${(p) => p.$w}px;
`;

type Layer = { name: string; on?: boolean; kind: "dot" | "fill" | "line"; color: string; under?: boolean; tone?: "gray" | "blue"; memory?: boolean };

const treeItems: [string, string, boolean][] = [
  ["star", "Ulubione", false], ["bookmark", "Zakładki przestrzenne", true], ["home", "Home", true],
  ...["C:\\", "D:\\", "F:\\", "G:\\", "H:\\", "I:\\", "J:\\", "X:\\"].map((d): [string, string, boolean] => ["folder", d, true]),
  ["gpkg", "GeoPackage", false], ["feather", "SpatiaLite", false], ["elephant", "PostGIS", false],
];

const DockHeader = ({ title, pad }: { title: string; pad: number }) => (
  <DockTitle $pad={pad}>
    <DockName>{title}</DockName>
    <DockButton type="button" aria-label="float"><svg width="8" height="8"><path d="M3.500.5h4v4h-4zM.5 3.500h4v4h-4z" fill="none" stroke="#555" /></svg></DockButton>
    <DockButton type="button" aria-label="close"><svg width="8" height="8"><path d="M1 1l6 6M7 1L1 7" stroke="#333" strokeWidth="2" /></svg></DockButton>
  </DockTitle>
);

type WindowProps = {
  id: string; pad: number; off?: boolean; active?: boolean; digitize?: string; shown?: number; layers: Layer[];
  coords: string; coordW: number; scale: string; message?: string; bottom?: boolean; map?: React.ReactNode;
};

const MainWindow = ({ id, pad, off, active, digitize = "points", shown, layers, coords, coordW, scale, message, bottom = true, map }: WindowProps) => (
  <Chrome>
    <Edge />
    <MenuBar $pad={pad} $off={off}>
      {menus.map((m) => <MenuButton key={m} type="button" $on={active && m === "Wekt&or"}><Mnemonic text={m} /></MenuButton>)}
    </MenuBar>
    <ToolRow $pad={pad}><Tools items={row1} /></ToolRow>
    <ToolRow $pad={pad}><Tools items={row2(digitize)} shown={shown} /></ToolRow>
    <ToolRow $pad={pad} $h={38} $last><Tools items={row3} /></ToolRow>
    <Body>
      <Docks $pad={pad}>
        <DockHeader title="Przeglądarka" pad={pad} />
        <DockTools $pad={pad}><Tools items="additem refresh filter collapse info" w={25} size={16} /></DockTools>
        <Tree>
          <TreeList $pad={pad}>
            {treeItems.map(([icon, text, more]) => (
              <TreeRow key={text}><Twist>{more && <Arrow $dir="right" />}</Twist><Icon name={icon} size={16} /><TreeText>{text}</TreeText></TreeRow>
            ))}
          </TreeList>
          <Scroll><ScrollEnd><Arrow $dir="up" /></ScrollEnd><ScrollThumb /><ScrollEnd><Arrow /></ScrollEnd></Scroll>
        </Tree>
        <Splitter />
        <DockHeader title="Warstwy" pad={pad} />
        <DockTools $pad={pad}><Tools items="brush addgroup eye filter eps v expand collapse removeitem" w={25} size={16} /></DockTools>
        <Layers>
          {layers.map((l) => (
            <LayerRow key={l.name} $pad={pad} $tone={l.tone}>
              <Check id={`${id}-${l.name}`} defaultChecked={l.on} />
              <Swatch $c={l.color} $kind={l.kind} />
              <LayerName htmlFor={`${id}-${l.name}`} $off={!l.on} $under={l.under} $light={l.tone === "blue"}>{l.name}</LayerName>
              {l.memory && <MemoryTag><Icon name="memory" size={14} /></MemoryTag>}
            </LayerRow>
          ))}
        </Layers>
      </Docks>
      <SideGrip />
      <MapPane>{map}</MapPane>
    </Body>
    <StatusBar $pad={pad}>
      <StatusLead>
        <Box $w={200} $h={21} $plain><BoxLead><Gap $w={3} /><Icon name="search" size={13} /></BoxLead><BoxInput aria-label="Szukaj" placeholder="Szukana fraza (Ctrl+K)" /></Box>
        <StatusMessage>{message}</StatusMessage>
        <label htmlFor={`${id}-xy`}>Współrzędne</label>
        <Box $w={coordW} $plain><BoxInput id={`${id}-xy`} $center defaultValue={coords} /></Box>
      </StatusLead>
      <StatusTail>
        <Icon name="extent" size={17} /><Gap $w={3} />
        <label htmlFor={`${id}-scale`}>Skala</label>
        <Combo id={`${id}-scale`} value={scale} w={80} line />
        <Gap $w={4} /><Icon name="lock" size={16} />
        <label htmlFor={`${id}-mag`}>Powiększenie</label>
        <Spin id={`${id}-mag`} value="100%" w={88} />
        <Gap $w={1} /><label htmlFor={`${id}-rot`}>Obrót</label><Gap $w={1} />
        <Spin id={`${id}-rot`} value="0,0 °" w={83} />
        <Check id={`${id}-render`} defaultChecked />
        <label htmlFor={`${id}-render`}>Renderuj</label>
        <Gap $w={4} /><Icon name="crs" size={16} />
        <span>Brak układu współrzędnych</span>
        <Gap $w={8} /><Icon name="message" size={16} />
      </StatusTail>
    </StatusBar>
    {bottom && <Edge $plain />}
  </Chrome>
);

/* ---------- maps ---------- */

const coast =
  "M500 757L688 757L716 755L725 745L737 747L730 752L728 765L737 780L722 800L711 818L735 820L758 830L775 845L800 870L820 905L840 940L862 990L880 1030L895 1060L908 1090L918 1105L945 1118L970 1126L1000 1122L1020 1105L1035 1088L1050 1068L1028 1058L1025 1020L1010 990L1003 950L1000 925L985 905L1000 912L1020 910L1035 890L1035 850L1043 815L1060 820L1085 805L1105 795L1110 780L1135 755L1142 725L1160 718L1175 720L1187 708L1178 695L1195 705L1215 710L1225 730L1205 723L1182 730L1172 745L1178 766L1168 770L1148 795L1143 830L1122 845L1116 862L1135 878L1160 885L1185 905L1200 930L1203 970L1225 988L1245 998L1270 1000L1310 990L1370 965L1410 950L1440 935L1500 915L1568 885L1608 875L1638 870L1658 862L1688 848L1703 825L1708 800L1723 785L1748 778L1758 788L1733 795L1723 815L1726 835L1715 848L1713 885L1700 905L1688 915L1688 945L1715 945L1718 948L1706 958L1690 960L1668 968L1648 988L1628 1000L1608 1014L1590 1040L1568 1064L1552 1072L1540 1082L1530 1085L1515 1110L1495 1150L1485 1200L1490 1225L1520 1262L1530 1275L1548 1262L1552 1268L1545 1290L1530 1302L1490 1305L1488 1292L1478 1325L1470 1330L1460 1345L1451 1388L1439 1448L1426 1512L1420 1560L500 1560Z";
const bristol = "M1716 847L1971 859L1965 1034L1608 1014L1628 1000L1648 988L1668 968L1690 960L1706 958L1718 948L1688 945L1688 915L1700 905L1713 885Z";
const border = "M1990 386L1922 386L1920 442L1858 440L1855 495L1818 495L1816 551L1691 546L1687 601L1625 599L1618 711L1648 713L1638 870";

/* point positions, on the sheet of the second window */
const people: [number, number][] = [
  [940, 324], [1257, 366], [758, 464], [819, 608], [775, 645], [798, 692], [945, 664], [994, 758], [768, 769], [761, 784], [768, 792], [851, 897],
  [1275, 787], [1354, 779], [1370, 762], [1372, 740], [1342, 733], [1384, 709], [1402, 666], [1425, 656], [1436, 670], [1428, 673], [1425, 681], [1441, 675],
  [1494, 673], [1485, 681], [1402, 627], [1416, 612], [1430, 597], [1441, 590], [1501, 553], [1531, 540], [1515, 573], [1565, 540], [1556, 645],
  [1333, 848], [1333, 855], [1360, 867], [1347, 885], [1329, 890], [1319, 895], [1400, 884], [1483, 908], [1515, 938], [1554, 918], [1252, 947],
  [1144, 1086], [1365, 1169], [1183, 1208], [1190, 1210], [1303, 1337], [1554, 1367], [1176, 1450], [1891, 690], [1816, 1015], [1803, 1017],
  [1642, 1398], [1678, 1435], [1727, 1446],
];
const buildings = people.filter(([x, y]) => x > 1310 && x < 1560 && y > 770 && y < 945);

const Coast = ({ dx = 0, dy = 0, points, color }: { dx?: number; dy?: number; points: [number, number][]; color: string }) => (
  <MapSvg role="img" aria-label="regions">
    <rect width="100%" height="100%" fill={green} />
    <g transform={`translate(${dx - 168} ${dy - 60}) scale(.4337 .4955) translate(-688 -302)`} stroke="#333" strokeWidth="1" strokeLinejoin="round">
      <path d={coast} fill="#fff" vectorEffect="non-scaling-stroke" />
      <path d={border} fill="none" vectorEffect="non-scaling-stroke" />
      <path d={bristol} fill="#ff0" vectorEffect="non-scaling-stroke" />
    </g>
    <g transform={`translate(${dx} ${dy})`} fill={color} stroke="#2d3a44" strokeWidth="1">
      {points.map(([x, y], i) => <circle key={i} cx={Math.round((x - 719) / 2.306)} cy={Math.round((y - 304) / 2.178)} r="3.700" />)}
    </g>
    {color === "#95512e" && dx === 0 && (
      <g stroke="#333">
        <path d="M575 518H1100V560H583z" fill="#fff" />
        <path d="M541 518v30" />
        <path d="M850 521h50l40 25h-50zM955 520l40 22 50-18v25h-80zM1000 530l20-10 25 5v20h-40z" fill={green} />
      </g>
    )}
  </MapSvg>
);

/* buffer circle centres, back to front */
const buffers: [number, number][] = [
  [1230, 420], [1420, 380], [1560, 400], [1330, 440], [1350, 455], [1370, 470], [1300, 480], [1285, 485], [1275, 492], [1262, 500], [1570, 500], [1590, 560],
  [1400, 500], [1560, 620], [1232, 545], [1240, 572], [1595, 570],
  [1068, 531], [1072, 536], [1080, 545], [1085, 552], [1112, 557], [1068, 600],
  [1500, 681], [1504, 686], [1508, 692], [1512, 698], [1517, 705], [1524, 712], [1530, 720], [1534, 740], [1545, 756], [1560, 757], [1161, 666],
  [1345, 754], [1350, 762], [1356, 768], [1330, 795], [1390, 770], [1400, 815], [1560, 825], [1410, 840], [1540, 840], [1500, 860],
  [1265, 845], [1268, 848], [1275, 850], [1282, 853], [1290, 860], [1300, 868], [1308, 876], [1318, 886], [1328, 893], [1690, 860], [1700, 870], [1345, 985], [1300, 1003], [1295, 1000],
  [1400, 1036], [1403, 1040], [1408, 1034], [1402, 1021], [1650, 1250], [1655, 1270], [1670, 1290], [1521, 1040], [1520, 1437], [1438, 1458],
];
const Buffers = () => (
  <MapSvg role="img" aria-label="Bufor">
    <g transform="scale(.4337 .4912) translate(-693 -327)" stroke="#333" strokeWidth="1" fill={green}>
      <path vectorEffect="non-scaling-stroke" d="M764 767l12 0 20 6 24 0 10-10 20-4 10-6 14 6 10-4 4 10 8 10 28 4 6 10-4 20 0 22 2 12-26 2-20 0-10 16-10-2-4-8-20-8-24-20-24-22-18-18z" />
      <path vectorEffect="non-scaling-stroke" d="M958 742l12-4 24-14 60 30 60 40 0 90-28 0-24-6-12-12 4-20-20-30-12-20-20-8-18-24 10-12-12-6-16 2z" />
      <path vectorEffect="non-scaling-stroke" fill="none" strokeDasharray="3 3" d="M1036 845l8 40 20 16" />
    </g>
    <g fill="#c43a39" stroke="#222" strokeWidth="1">
      {buffers.map(([x, y], i) => {
        const cx = (x - 693) / 2.306;
        const cy = (y - 327) / 2.036;
        const pts = Array.from({ length: 20 }, (_, k) => {
          const a = (k * Math.PI) / 10;
          return `${Math.round(cx + 79 * Math.cos(a))},${Math.round(cy + 79 * Math.sin(a))}`;
        });
        return <polygon key={i} points={pts.join(" ")} />;
      })}
    </g>
  </MapSvg>
);

/* ---------- menus ---------- */

const Popup = styled.ul<{ $x: number; $w: number }>`
  position: absolute;
  left: ${(p) => p.$x}px;
  top: 22px;
  width: ${(p) => p.$w}px;
  margin: 0;
  padding: 0;
  list-style: none;
  border: 1px solid #979797;
  background: #fff;
  box-shadow: 3px 3px 3px rgba(0, 0, 0, 0.5);
  z-index: 4;
`;
const PopupItem = styled.li<{ $on?: boolean; $lead?: number }>`
  display: flex;
  align-items: center;
  justify-content: space-between;
  height: 23px;
  padding: 0 6px 0 ${(p) => p.$lead ?? 6}px;
  background: ${(p) => (p.$on ? blue : "none")};
  color: ${(p) => (p.$on ? "#fff" : "#000")};
`;
const PopupText = styled.span`
  display: flex;
  gap: 5px;
  align-items: center;
  white-space: nowrap;
`;
const vectorMenu = ["Narzędzia &geoprocesingu", "Narzędzia g&eometrii", "Narzędzia &analizy", "Narzędzia &badawcze", "Narzędzia zarządzania &danymi"];
const geoMenu = [["buffer", "Bufor..."], ["clip", "Przytnij..."], ["hull", "Otoczka wypukła..."], ["diff", "Różnica..."], ["dissolve", "Agreguj..."], ["intersect", "Iloczyn..."], ["symdiff", "Różnica symetryczna..."], ["union", "Suma..."], ["dissolve", "Eliminuj wybrane poligony..."]];

const VectorMenus = ({ x }: { x: number }) => (
  <>
    <Popup $x={x} $w={229}>
      {vectorMenu.map((m, i) => (
        <PopupItem key={m} $on={i === 0} $lead={27}><span><Mnemonic text={m} /></span><Arrow $dir="right" $light={i === 0} /></PopupItem>
      ))}
    </Popup>
    <Popup $x={x + 229} $w={246}>
      {geoMenu.map(([icon, m]) => (
        <PopupItem key={m} $on={m === "Iloczyn..."}><PopupText><Icon name={icon} size={16} />{m}</PopupText></PopupItem>
      ))}
    </Popup>
  </>
);

/* ---------- dialogs ---------- */

const Frame = styled.section<{ $x: number; $y: number; $w: number; $h: number; $side?: number; $light?: boolean; $z?: number }>`
  position: absolute;
  left: ${(p) => p.$x}px;
  top: ${(p) => p.$y}px;
  width: ${(p) => p.$w}px;
  height: ${(p) => p.$h}px;
  display: flex;
  flex-direction: column;
  padding: 0 ${(p) => p.$side ?? 5}px ${(p) => p.$side ?? 5}px;
  border: 1px solid #222;
  border-radius: 7px 7px 5px 5px;
  background: ${(p) => (p.$light
    ? "linear-gradient(#d4d4d4, #ececec 24px, #e4e4e4 28px, #dcdcdc)"
    : "linear-gradient(90deg, #d6d6d6, #c2c2c2 140px, #949494 240px, #9c9c9c)")};
  box-shadow: 0 1px 10px 3px rgba(0, 0, 0, 0.65), inset 0 0 0 1px rgba(255, 255, 255, 0.6);
  z-index: ${(p) => p.$z ?? 2};
`;
const Caption = styled.header<{ $h: number }>`
  display: flex;
  align-items: center;
  gap: 5px;
  flex: none;
  height: ${(p) => p.$h}px;
  padding-left: 2px;
  white-space: nowrap;
`;
const CaptionText = styled.h1`
  margin: 0;
  padding: 0 4px;
  font: inherit;
  text-shadow: 0 0 8px #fff, 0 0 8px #fff, 0 0 12px #fff;
`;
const Client = styled.div`
  flex: 1;
  min-height: 0;
  display: flex;
  flex-direction: column;
  border: 1px solid #555;
  background: #f0f0f0;
`;
const ClientTools = styled.div`
  display: flex;
  align-items: center;
  flex: none;
  height: 31px;
  padding-left: 2px;
`;
const TableArea = styled.div`
  flex: 1;
  min-height: 0;
  overflow: hidden;
  border-top: 1px solid #bbb;
  border-bottom: 1px solid #bbb;
  background: linear-gradient(90deg, #f0f0f0 18px, #fff 18px);
`;
const Grid = styled.table<{ $w: number }>`
  width: ${(p) => p.$w}px;
  table-layout: fixed;
  border-collapse: collapse;
`;
const Head = styled.th<{ $w: number }>`
  width: ${(p) => p.$w}px;
  height: 19px;
  padding: 0;
  font-weight: 400;
  border-right: 1px solid #c4c4c4;
  border-bottom: 1px solid #b4b4b4;
  background: linear-gradient(#fff, #f0f0f0);
`;
const RowHead = styled.th`
  height: 30px;
  padding: 0 0 0 2px;
  font-weight: 400;
  text-align: left;
  border: 1px solid #b4b4b4;
  border-left: 0;
  background: #f4f4f4;
`;
const Cell = styled.td<{ $num?: boolean; $alt?: boolean; $focus?: boolean }>`
  height: 30px;
  padding: 0 3px;
  border: 1px solid #c4c4c4;
  text-align: ${(p) => (p.$num ? "right" : "left")};
  background: ${(p) => (p.$focus ? "linear-gradient(#fff, #e6f1fb)" : p.$alt ? "#e8e6e2" : "#fff")};
  ${(p) => p.$focus && "outline: 2px solid #1fe884; outline-offset: -2px;"}
  white-space: nowrap;
  overflow: hidden;
`;
const Foot = styled.div`
  flex: none;
  display: flex;
  align-items: center;
  height: 30px;
  padding-left: 3px;
  font-family: ${form};
`;

const AttributeTable = ({ heads, rows, num, tools, w, focus }: { heads: [string, number][]; rows: string[][]; num: string[]; tools: string; w: number; focus?: boolean }) => (
  <Client>
    <ClientTools><Tools items={tools} w={25} size={17} /></ClientTools>
    <TableArea>
      <Grid $w={w}>
        <thead><tr><Head $w={18} aria-label="#" />{heads.map(([h, cw]) => <Head key={h} $w={cw}>{h}</Head>)}</tr></thead>
        <tbody>
          {rows.map((r, i) => (
            <tr key={i}>
              <RowHead scope="row">{i + 1}</RowHead>
              {r.map((c, j) => <Cell key={j} $num={num.includes(heads[j][0])} $alt={i % 2 === 1} $focus={focus && i === 0 && j === 0}>{c}</Cell>)}
            </tr>
          ))}
        </tbody>
      </Grid>
    </TableArea>
    <Foot><PushButton type="button" $w={148}><Icon name="filter" size={15} />Pokaż wszystkie obiekty<Arrow /></PushButton></Foot>
  </Client>
);

const regionRows = [
  ["16", "Nome", "Census Area"], ["15", "Matanuska-Sus...", "Borough"], ["18", "Northwest Arctic", "Borough"], ["17", "North Slope", "Borough"],
  ["20", "Sitka", "City And Borou..."], ["19", "Prince of Wales...", "Census Area"], ["22", "Southeast Fairb...", "Census Area"], ["21", "Skagway-Yakut...", "Census Area"],
  ["24", "Wade Hampton", "Census Area"], ["23", "Valdez-Cordova", "Census Area"], ["26", "Yukon-Koyukuk", "Census Area"], ["25", "Wrangell-Peter...", "Census Area"],
  ["2", "Aleutians West", "Census Area"], ["1", "Aleutians East", "Borough"], ["4", "Bethel", "Census Area"], ["3", "Anchorage", "Municipality"],
];
const resultRows = [
  ["1508,000", "Settlement", "AL105", "SAVONOSKI"], ["1505,000", "Building", "AL015", "CANNERIES"], ["1510,000", "Building", "AL015", "CANNERIES"],
  ["1509,000", "Settlement", "AL105", "SOUTH NAKNEK"], ["1512,000", "Settlement", "AL105", "KING SALMON"], ["1511,000", "Building", "AL015", "CANNERIES"],
  ["1517,000", "Camp", "AI030", "CAMPS"], ["1513,000", "Camp", "AI030", "CAMPS"], ["1493,000", "Settlement", "AL105", "KOGGIUNG"],
  ["1503,000", "Building", "AL015", "CANNERIES"], ["1501,000", "Building", "AL015", "CANNERIES"],
].map((r) => [...r, "5", "Bristol Bay", "Borough"]);

const Tabs = styled.div`
  display: flex;
  align-items: flex-end;
  height: 23px;
`;
const Tab = styled.button<{ $on?: boolean; $w: number }>`
  width: ${(p) => p.$w}px;
  height: ${(p) => (p.$on ? 24 : 21)}px;
  margin-bottom: ${(p) => (p.$on ? -1 : 0)}px;
  padding: 0;
  border: 1px solid #b0b0b0;
  border-bottom: 0;
  border-radius: 2px 2px 0 0;
  background: ${(p) => (p.$on ? "#fff" : "linear-gradient(#eee, #e2e2e2)")};
  z-index: 1;
`;

/* expression dialog */
const Builder = styled.div`
  display: flex;
  gap: 23px;
  flex: 1;
  min-height: 0;
  padding: 8px 0 0 9px;
  border-top: 1px solid #b0b0b0;
  font-family: ${form};
`;
const EditorCol = styled.div`
  display: flex;
  flex-direction: column;
  width: 299px;
`;
const Line = styled.div<{ $gap?: number; $mb?: number }>`
  display: flex;
  align-items: center;
  gap: ${(p) => p.$gap ?? 2}px;
  margin-bottom: ${(p) => p.$mb ?? 0}px;
`;
const SquareButton = styled(PushButton)`
  width: 24px;
  height: 23px;
  padding: 0;
`;
const Code = styled.code`
  display: block;
  height: 400px;
  margin-bottom: 6px;
  border: 1px solid #b0b0b0;
  background: linear-gradient(#f0f0f0 18px, #fff 18px);
  font: 13px/18px "Liberation Mono", monospace;
  padding-left: 1px;
  white-space: pre;
`;
const Tok = styled.span<{ $c: string }>`
  color: ${(p) => p.$c};
`;
const FunctionCol = styled.div`
  display: flex;
  flex-direction: column;
  width: 252px;
`;
const FunctionList = styled.ul`
  height: 478px;
  margin: 0;
  padding: 0;
  list-style: none;
  border: 1px solid #b0b0b0;
  background: #fff;
`;
const FunctionRow = styled.li`
  display: flex;
  align-items: center;
  height: 15px;
  padding-left: 9px;
  line-height: 15px;
`;
const FunctionText = styled.span`
  flex: 1;
  margin-left: 6px;
  padding-left: 3px;
  background: #c1c1c1;
`;
const BlankPane = styled.div`
  width: 300px;
  height: 506px;
  margin-left: -9px;
  border: 1px solid #b0b0b0;
  background: #fff;
`;
const BuilderFoot = styled.div`
  display: flex;
  align-items: center;
  gap: 562px;
  height: 31px;
  padding: 0 4px;
  font-family: ${form};
`;
const Tip = styled.div<{ $x: number; $y: number }>`
  position: absolute;
  left: ${(p) => p.$x}px;
  top: ${(p) => p.$y}px;
  padding: 1px 3px;
  border: 1px solid #000;
  background: #ffffe1;
  box-shadow: 3px 3px 3px rgba(0, 0, 0, 0.5);
  font-family: ${form};
  white-space: nowrap;
  z-index: 5;
`;
const TipLine = styled.div<{ $mt?: number }>`
  margin-top: ${(p) => p.$mt ?? 0}px;
  line-height: 15px;
`;

const functions = ["Data i czas", "Funkcje agregujące", "General", "Geometria", "Kolor", "Konwersja", "Luźne dopasowywanie", "Mapy wartości", "Matematyczne", "Operatory", "Ostatnio użyte (selection)", "Pliki i ścieżki", "Pola i wartości", "Rastry", "Tablice", "Tekstowe", "Warstwy mapy", "Warstwy mapy", "Wiersz i atrubuty", "Wyrażenia użytkownika", "Wyrażenia warunkowe", "Zmienne"];

const TabWrap = styled.div`
  padding: 3px 0 0 4px;
  font-family: ${form};
`;

const ExpressionDialog = () => (
  <Frame $x={623} $y={47} $w={760} $h={621} $z={3}>
    <Caption $h={28}><Icon name="qgis" size={17} /><CaptionText>regions - Zaznacz wyrażeniem</CaptionText></Caption>
    <Client>
      <TabWrap><Tabs><Tab type="button" $on $w={76}>Wyrażenie</Tab><Tab type="button" $w={89}>Edytor funkcji</Tab></Tabs></TabWrap>
      <Builder>
        <EditorCol>
          <Line $mb={6}>
            {["newdoc", "save", "~editdoc", "~trash", "import", "export"].map((n) => (
              <SquareButton key={n} type="button" aria-label={n.replace("~", "")}><Icon name={n.replace("~", "")} size={16} dim={n[0] === "~"} /></SquareButton>
            ))}
          </Line>
          <Code><Tok $c="#4271ae">NAME_2</Tok> <Tok $c="#8959a8">=</Tok> <Tok $c="#718c00">'Bristol Bay'</Tok></Code>
          <Line $mb={9}>
            {["=", "+", "-", "/", "*", "^", "||", "(", ")", "'\\n'"].map((o, i) => <PushButton key={o} type="button" $w={28} $focus={i === 0}>{o}</PushButton>)}
          </Line>
          <Line $gap={6} $mb={6}>
            <label htmlFor="feature">Obiekt</label>
            <Combo id="feature" value="Aleutians East" line h={22} />
            <SquareButton type="button" disabled aria-label="prev"><Icon name="prev" size={15} /></SquareButton>
            <SquareButton type="button" aria-label="next"><Icon name="next" size={15} /></SquareButton>
          </Line>
          <span>Podgląd:&nbsp; 0</span>
        </EditorCol>
        <FunctionCol>
          <Line $gap={6} $mb={6}>
            <Box $w={166} $h={22} $plain><BoxLead><Gap $w={2} /><Icon name="search" size={13} /></BoxLead><BoxInput aria-label="Szukaj" placeholder="Szukaj..." /></Box>
            <PushButton type="button" $w={80} disabled>Pokaż pomoc</PushButton>
          </Line>
          <FunctionList>
            {functions.map((f, i) => <FunctionRow key={i}><Arrow $dir="right" /><FunctionText>{f}</FunctionText></FunctionRow>)}
          </FunctionList>
        </FunctionCol>
        <BlankPane />
      </Builder>
      <BuilderFoot>
        <PushButton type="button" $w={80}>Pomoc</PushButton>
        <PushButton type="button"><Icon name="epsy" size={15} />Zaznacz obiekty</PushButton>
      </BuilderFoot>
    </Client>
  </Frame>
);

/* processing dialogs */
const Split = styled.div`
  display: flex;
  gap: 16px;
  padding: 12px 11px 0;
  font-family: ${form};
`;
const ParamCol = styled.div`
  position: relative;
  flex: none;
  width: 394px;
`;
const Pane = styled.div<{ $h: number }>`
  display: flex;
  flex-direction: column;
  height: ${(p) => p.$h}px;
  padding: 4px 0 0 6px;
  border: 1px solid #a8a8a8;
  overflow: hidden;
`;
const Label = styled.label`
  display: block;
  flex: none;
  height: 18px;
  margin-bottom: 3px;
  white-space: nowrap;
`;
const Row = styled.div<{ $gap?: number }>`
  display: flex;
  align-items: center;
  flex: none;
  gap: ${(p) => p.$gap ?? 8}px;
  margin: 0 5px 5px 0;
`;
const CheckRow = styled.label<{ $off?: boolean }>`
  display: flex;
  align-items: center;
  gap: 5px;
  flex: none;
  height: 14px;
  margin: 5px 0 7px;
  color: ${(p) => (p.$off ? "#8c8c8c" : "#000")};
  white-space: nowrap;
`;
const GroupTitle = styled.h3`
  display: flex;
  align-items: center;
  gap: 8px;
  flex: none;
  height: 18px;
  margin: 0 0 2px;
  padding-left: 3px;
  font: 700 11px/18px "DejaVu Sans", sans-serif;
  &::before { content: ""; border: 5px solid transparent; border-top: 7px solid #333; border-bottom: 0; }
`;
const Group = styled.div`
  flex: none;
  margin-bottom: 5px;
  padding: 8px 0 11px 11px;
  border: 1px solid #d9d9d9;
  border-right: 0;
  background: #ededed;
`;
const HBar = styled.div`
  display: flex;
  height: 14px;
  margin: auto 1px 0 -5px;
  border-top: 1px solid #bbb;
  background: #e2e2e2;
`;
const HEnd = styled.span`
  display: grid;
  place-items: center;
  width: 14px;
  background: #fafafa;
`;
const HThumb = styled.span`
  flex: 1;
  margin-right: 32px;
  border: solid #bbb;
  border-width: 0 1px;
  background: #f8f8f8;
`;
const Help = styled.aside<{ $h: number }>`
  flex: 1;
  min-width: 0;
  height: ${(p) => p.$h}px;
  padding: 4px 3px;
  border: 1px solid #b0b0b0;
  background: #fff;
  color: #6a6a6a;
  line-height: 13px;
  overflow: hidden;
  h2 { margin: 0 0 10px; font: 700 16px/24px "DejaVu Sans", sans-serif; color: #4a4a4a; }
  p { margin: 0 0 13px; white-space: pre; }
`;
const CollapseMark = styled.span`
  position: absolute;
  right: -11px;
  top: 1px;
`;
const Progress = styled.div`
  flex: 1;
  height: 21px;
  border: 1px solid #adadad;
  border-radius: 2px;
  background: #fff;
  text-align: center;
`;
const ActionRow = styled.div<{ $mt: number }>`
  display: flex;
  gap: 7px;
  margin: ${(p) => p.$mt}px 11px 0;
  font-family: ${form};
`;
const Push = styled.span`
  flex: 1;
`;

const ParamTabs = () => (
  <>
    <Tabs><Tab type="button" $on $w={74}>Parametry</Tab><Tab type="button" $w={79}>Plik zdarzeń</Tab></Tabs>
    <CollapseMark><Arrow $dir="left" /></CollapseMark>
  </>
);

const SourceField = ({ id, label, icon, value, only, w, more }: { id: string; label: string; icon: string; value: string; only?: boolean; w: number; more?: boolean }) => (
  <>
    <Label htmlFor={id}>{label}</Label>
    <Row $gap={11}>
      <Combo id={id} icon={icon} value={value} w={w} h={24} />
      <Icon name="cycle" size={23} /><Icon name="wrench" size={24} />
      {more && <PushButton type="button" $w={23}>...</PushButton>}
    </Row>
    <CheckRow $off={!only}><Check defaultChecked={only} disabled={!only} />Tylko zaznaczone obiekty</CheckRow>
  </>
);

const OverlayDialog = ({ id, x, y, h, side, source, overlay, paneH, actions }: { id: string; x: number; y: number; h: number; side: number; source: [string, string]; overlay: [string, string, boolean]; paneH: number; actions?: boolean }) => (
  <Frame $x={x} $y={y} $w={603} $h={h} $side={side}>
    <Caption $h={27}><Icon name="qgis" size={16} /><CaptionText>Iloczyn</CaptionText></Caption>
    <Client>
      <Split>
        <ParamCol>
          <ParamTabs />
          <Pane $h={paneH}>
            <SourceField id={`${id}-src`} label="Warstwa źródłowa" icon={source[0]} value={source[1]} w={317} />
            <SourceField id={`${id}-ovl`} label="Warstwa nakładki" icon={overlay[0]} value={overlay[1]} only={overlay[2]} w={317} />
            <Label htmlFor={`${id}-f1`}>Wybierz pola z warstwy wejściowej (zostaw puste, aby wybrać wszystkie) [opcjonalne]</Label>
            <Row><Box $w={480} $flat><BoxInput id={`${id}-f1`} placeholder="Wybrano 0 opcji" /></Box></Row>
            <Label htmlFor={`${id}-f2`}>Wybierz pola z warstwy nakładki (zostaw puste, aby wybrać wszystkie) [opcjonalne]</Label>
            <Row><Box $w={480} $flat><BoxInput id={`${id}-f2`} placeholder="Wybrano 0 opcji" /></Box></Row>
            <GroupTitle>Zaawansowane parametry</GroupTitle>
            <Group>
              <Label htmlFor={`${id}-pre`}>Overlay fields prefix [opcjonalne]</Label>
              <Box $w={480} $plain><BoxInput id={`${id}-pre`} /></Box>
            </Group>
            <Label htmlFor={`${id}-out`}>Iloczyn</Label>
            <Row><Box $w={480} $plain><BoxInput id={`${id}-out`} placeholder="[Twórz warstwę tymczasową]" /></Box></Row>
            <CheckRow><Check defaultChecked />Wczytaj plik wynikowy po zakończeniu</CheckRow>
            <HBar><HEnd><Arrow $dir="left" /></HEnd><HThumb /><HEnd><Arrow $dir="right" /></HEnd></HBar>
          </Pane>
        </ParamCol>
        <Help $h={paneH + 24}>
          <h2>Iloczyn</h2>
          <p>{"Algorytm wyodrębnia części\nobiektów w warstwach.\nObiektom wyjściowym\nprzypisywane są atrybuty\nelementów zarówno z\nnakładki."}</p>
        </Help>
      </Split>
      <ActionRow $mt={26}><Progress>0%</Progress></ActionRow>
      {actions && (
        <ActionRow $mt={6}>
          <PushButton type="button" $w={201}>Wykonaj jako przetwarzanie wsadowe...</PushButton>
          <Push />
          <PushButton type="button" $w={80} $focus>Uruchom</PushButton>
          <PushButton type="button" $w={77}>Zamknij</PushButton>
        </ActionRow>
      )}
    </Client>
  </Frame>
);

const CaptionClose = styled.button`
  display: grid;
  place-items: center;
  align-self: flex-start;
  width: 48px;
  height: 18px;
  margin-left: auto;
  padding: 0;
  border: 1px solid #777;
  border-top: 0;
  border-radius: 0 0 4px 4px;
  background: #e4e4e4;
`;
const CloseMark = ({ color }: { color: string }) => (
  <svg width="12" height="9"><path d="M2 1l8 7M10 1L2 8" stroke="#333" strokeWidth="4" /><path d="M2 1l8 7M10 1L2 8" stroke={color} strokeWidth="2" /></svg>
);

const BufferDialog = () => (
  <Frame $x={669} $y={94} $w={697} $h={615} $side={3} $light>
    <Caption $h={27}><Icon name="qgis" size={16} /><CaptionText>Bufor</CaptionText><CaptionClose type="button" aria-label="close"><CloseMark color="#fff" /></CaptionClose></Caption>
    <Client>
      <Split>
        <ParamCol>
          <ParamTabs />
          <Pane $h={463}>
            <SourceField id="b-src" label="Warstwa źródłowa" icon="polyline" value="rivers [EPSG:2964]" w={280} more />
            <Label htmlFor="b-dist">Odległość</Label>
            <Row $gap={9}>
              <Spin id="b-dist" value="100,000000" w={265} clear />
              <Combo value="kilometry" label="Jednostka" w={72} h={22} />
              <Icon name="override" size={23} />
            </Row>
            <Label htmlFor="b-seg">Segmenty</Label>
            <Row><Spin id="b-seg" value="5" /></Row>
            <Label htmlFor="b-cap">Styl zakończenia</Label>
            <Row><Combo id="b-cap" value="zaokrąglony" h={22} /></Row>
            <Label htmlFor="b-join">Styl połączenia</Label>
            <Row><Combo id="b-join" value="zaokrąglony" h={22} /></Row>
            <Label htmlFor="b-mitre">Limit fazy (uciosu)</Label>
            <Row><Spin id="b-mitre" value="2,000000" /></Row>
            <CheckRow><Check />Agreguj wyniki</CheckRow>
            <Label htmlFor="b-out">Bufor</Label>
            <Row><Box $plain><BoxInput id="b-out" placeholder="[Twórz warstwę tymczasową]" /></Box><PushButton type="button" $w={23}>...</PushButton></Row>
            <CheckRow><Check defaultChecked />Wczytaj plik wynikowy po zakończeniu</CheckRow>
          </Pane>
        </ParamCol>
        <Help $h={487}>
          <h2>Bufor</h2>
          <p>{"Algorytm oblicza obszar bufora dla wszystkich\nobiektów warstwy wejściowej wykorzystując stałą\nlub zmienna szerokość bufora."}</p>
          <p>{"Parametr liczby segmentów określa stopień\nzaokrąglenia załamań bufora."}</p>
          <p>{"Parametr stylu zakończenia określa jak będą\ntraktowane zakończenia linii w buforze."}</p>
          <p>{"Parametr stylu połączenia określa w jaki sposób\nłączone będą linie podczas tworzenia bufora wokół\nzałamań linii."}</p>
          <p>{"Parametr limitu fazy (uciosu) może być\nzastosowany tylko dla ostrych połączeń i określa\nmaksymalną odległość od buforowanego załamania\npodczas tworzenia ostrych połączeń."}</p>
        </Help>
      </Split>
      <ActionRow $mt={26}><Progress>0%</Progress><PushButton type="button" $w={80} disabled>Anuluj</PushButton></ActionRow>
      <ActionRow $mt={6}>
        <PushButton type="button" $w={201}>Wykonaj jako przetwarzanie wsadowe...</PushButton>
        <Push />
        <PushButton type="button" $w={80}>Uruchom</PushButton>
        <PushButton type="button" $w={80}>Zamknij</PushButton>
        <PushButton type="button" $w={80}>Pomoc</PushButton>
      </ActionRow>
    </Client>
  </Frame>
);

const TitleBar = styled.header`
  display: flex;
  align-items: center;
  gap: 6px;
  height: 21px;
  padding-right: 3px;
  background: linear-gradient(90deg, #c9c9c9, #b5b5b5 160px, #555 230px, #2a2624 400px, #2b3436 60%, #4a3430 75%, #2b2b2b 85%, #1e1c1b);
`;
const WindowButtons = styled.div`
  display: flex;
  align-self: flex-start;
  margin-left: auto;
  border: 1px solid #aaa;
  border-top: 0;
  border-radius: 0 0 4px 4px;
`;
const WindowButton = styled.button<{ $w: number }>`
  display: grid;
  place-items: center;
  width: ${(p) => p.$w}px;
  height: 16px;
  padding: 0;
  border: 0;
  border-right: 1px solid #999;
  background: linear-gradient(#666, #333);
`;

const Page = styled.main`
  padding-bottom: 57px;
  overflow: hidden;
`;
const Blank = styled.div`
  height: 39px;
`;

export default function App() {
  return (
    <Page>
      <GlobalStyle />
      <Stage $l={12} $cut={11}>
        <MainWindow
          id="a" pad={0} off shown={12} coords="69206053,-24929492" coordW={122} scale="168917536"
          layers={[{ name: "popp", on: true, kind: "dot", color: "#6f7c85" }, { name: "regions", on: true, kind: "fill", color: "#6fae9b", under: true, tone: "gray" }]}
        />
        <Frame $x={295} $y={49} $w={400} $h={602}>
          <Caption $h={28}><Icon name="qgis" size={17} /><CaptionText>regions — Wszystkie obiekty: 26, Odfiltrowane: 26, Wybrane: 0</CaptionText></Caption>
          <AttributeTable
            tools="pencil ~editmulti ~saveedit refresh | ~table ~trash ~cut copy ~paste | epsy selall invert"
            heads={[["ID", 100], ["NAME_2", 100], ["TYPE_2", 100]]} num={["ID"]} rows={regionRows} w={318}
          />
        </Frame>
        <ExpressionDialog />
        <Note $x={641} $y={202} $w={307} $h={93} $pad="7px 5px">{"W warstwie \"regions\" zaznaczony został\ntylko region \"Bristol Bay\""}</Note>
        <Tip $x={1216} $y={656}>Zaznacz obiekty</Tip>
      </Stage>

      <Stage $l={12} $cut={11}>
        <MainWindow
          id="b" pad={2} active coords="-336568,3445666" coordW={107} scale="1:1319668"
          layers={[{ name: "popp", on: true, kind: "dot", color: "#4a78ad", under: true, tone: "blue" }, { name: "regions", on: true, kind: "fill", color: green }]}
          map={<Coast points={people} color="#75808e" />}
        />
        <VectorMenus x={350} />
        <OverlayDialog id="c" x={825} y={128} h={600} side={3} source={["pointset", "popp [EPSG:2964]"]} overlay={["polygon", "regions []", true]} paneH={471} />
        <Tip $x={1006} $y={283}>
          <TipLine><b>Warstwa źródłowa</b></TipLine>
          <TipLine $mt={13}>Identyfikator w Pythonie:</TipLine>
          <TipLine><i>'INPUT'</i></TipLine>
        </Tip>
        <Note $x={315} $y={489} $w={168} $h={100} $pad="0 6px">{"Wykonany został iloczyn\nwartwy \"ppop\" z\nwarstwą regions\nuwzględniając tylko\nzaznaczone obiekty"}</Note>
      </Stage>

      <Stage $l={11} $cut={11}>
        <Edge />
        <MainWindow
          id="d" pad={1} off shown={25} coords="-872683,3140951" coordW={100} scale="1:1319668" message="Włącza/wyłącza tryb edycji aktywnej warstwy" bottom={false}
          layers={[
            { name: "Iloczyn", on: true, kind: "dot", color: "#5d5360", under: true, tone: "gray", memory: true },
            { name: "popp", kind: "dot", color: "#6f7c85" }, { name: "regions", on: true, kind: "fill", color: green },
          ]}
          map={<Coast points={buildings} color="#95512e" />}
        />
        <Frame $x={711} $y={65} $w={680} $h={600}>
          <Caption $h={27}><Icon name="qgis" size={16} /><CaptionText>Iloczyn — Wszystkie obiekty: 11, Odfiltrowane: 11, Wybrane: 0</CaptionText></Caption>
          <AttributeTable
            tools="pencil ~editmulti ~saveedit refresh | ~table ~trash ~cut ~copy ~paste | epsy selall invert deselect filter movetop panmap zoomsel | ~column ~column editcol abacus | cond | docked gearplay"
            heads={[["cat", 100], ["F_CODEDESC", 100], ["F_CODE", 100], ["TYPE", 100], ["ID", 100], ["NAME_2", 100], ["TYPE_2", 100]]}
            num={["cat", "ID"]} rows={resultRows} w={718} focus
          />
        </Frame>
        <Note $x={748} $y={476} $w={193} $h={80} $pad="5px 10px">{"W regionie \"Bristol Bay jest\n11 budynków\""}</Note>
      </Stage>

      <TitleBar>
        <Icon name="qgis" size={16} /><span>*Projekt bez nazwy — QGIS</span>
        <WindowButtons>
          <WindowButton type="button" aria-label="minimize" $w={28}><svg width="12" height="9"><path d="M1 4h10v4H1z" fill="#fff" /></svg></WindowButton>
          <WindowButton type="button" aria-label="restore" $w={27}><svg width="12" height="11"><path d="M4 1h7v6M1.500 4h7v6h-7z" fill="none" stroke="#fff" strokeWidth="2" /></svg></WindowButton>
          <WindowButton type="button" aria-label="close" $w={46}><CloseMark color="#fff" /></WindowButton>
        </WindowButtons>
      </TitleBar>
      <Stage>
        <MainWindow
          id="e" pad={3} off digitize="blob" coords="-1344504,4935591" coordW={106} scale="1:1319668"
          layers={[
            { name: "Bufor", on: true, kind: "fill", color: "#98577b", under: true, tone: "gray", memory: true },
            { name: "rivers", kind: "line", color: "#e0ddca" }, { name: "Iloczyn", kind: "dot", color: "#95512e", memory: true },
            { name: "popp", kind: "dot", color: "#6f7c85" }, { name: "regions", on: true, kind: "fill", color: green },
          ]}
          map={<Buffers />}
        />
        <BufferDialog />
        <Note $x={161} $y={524} $w={299} $h={119} $pad="29px 41px" $clear>{"Wykonany został buffer na warstwie\n\"rivers\"  o odległośći 100km"}</Note>
      </Stage>

      <Blank />
      <Stage $r={20}>
        <MainWindow
          id="f" pad={1} active coords="-814690,3550053" coordW={106} scale="1:1319668"
          layers={[
            { name: "Bufor", kind: "fill", color: "#c43a39", memory: true }, { name: "rivers", kind: "line", color: "#e5dccf" },
            { name: "PunktyWOdelglosci100km", on: true, kind: "dot", color: "#5d5360", under: true, tone: "blue", memory: true },
            { name: "popp", kind: "dot", color: "#6f7c85" }, { name: "Iloczyn", kind: "fill", color: "#e2b435", memory: true },
            { name: "regions", on: true, kind: "fill", color: green },
          ]}
          map={<Coast dx={168} dy={60} points={buildings} color="#95512e" />}
        />
        <VectorMenus x={337} />
        <OverlayDialog id="g" x={851} y={91} h={612} side={4} source={["polygon", "Bufor [EPSG:2964]"]} overlay={["polygon", "Iloczyn [EPSG:2964]", false]} paneH={458} actions />
        <Note $x={292} $y={552} $w={308} $h={106} $pad="0 2px" $clear>{"Na końcu przeprowadzony został iloczyn\nutworzonego bufora (\"Buffor\") z warstwą\nreprezentującą budynku w regionie \"Bristol\nBay\". Budynków odległych o 100km od rzek w\nregionie \"Bristol Bay\" jest 11"}</Note>
      </Stage>
    </Page>
  );
}
